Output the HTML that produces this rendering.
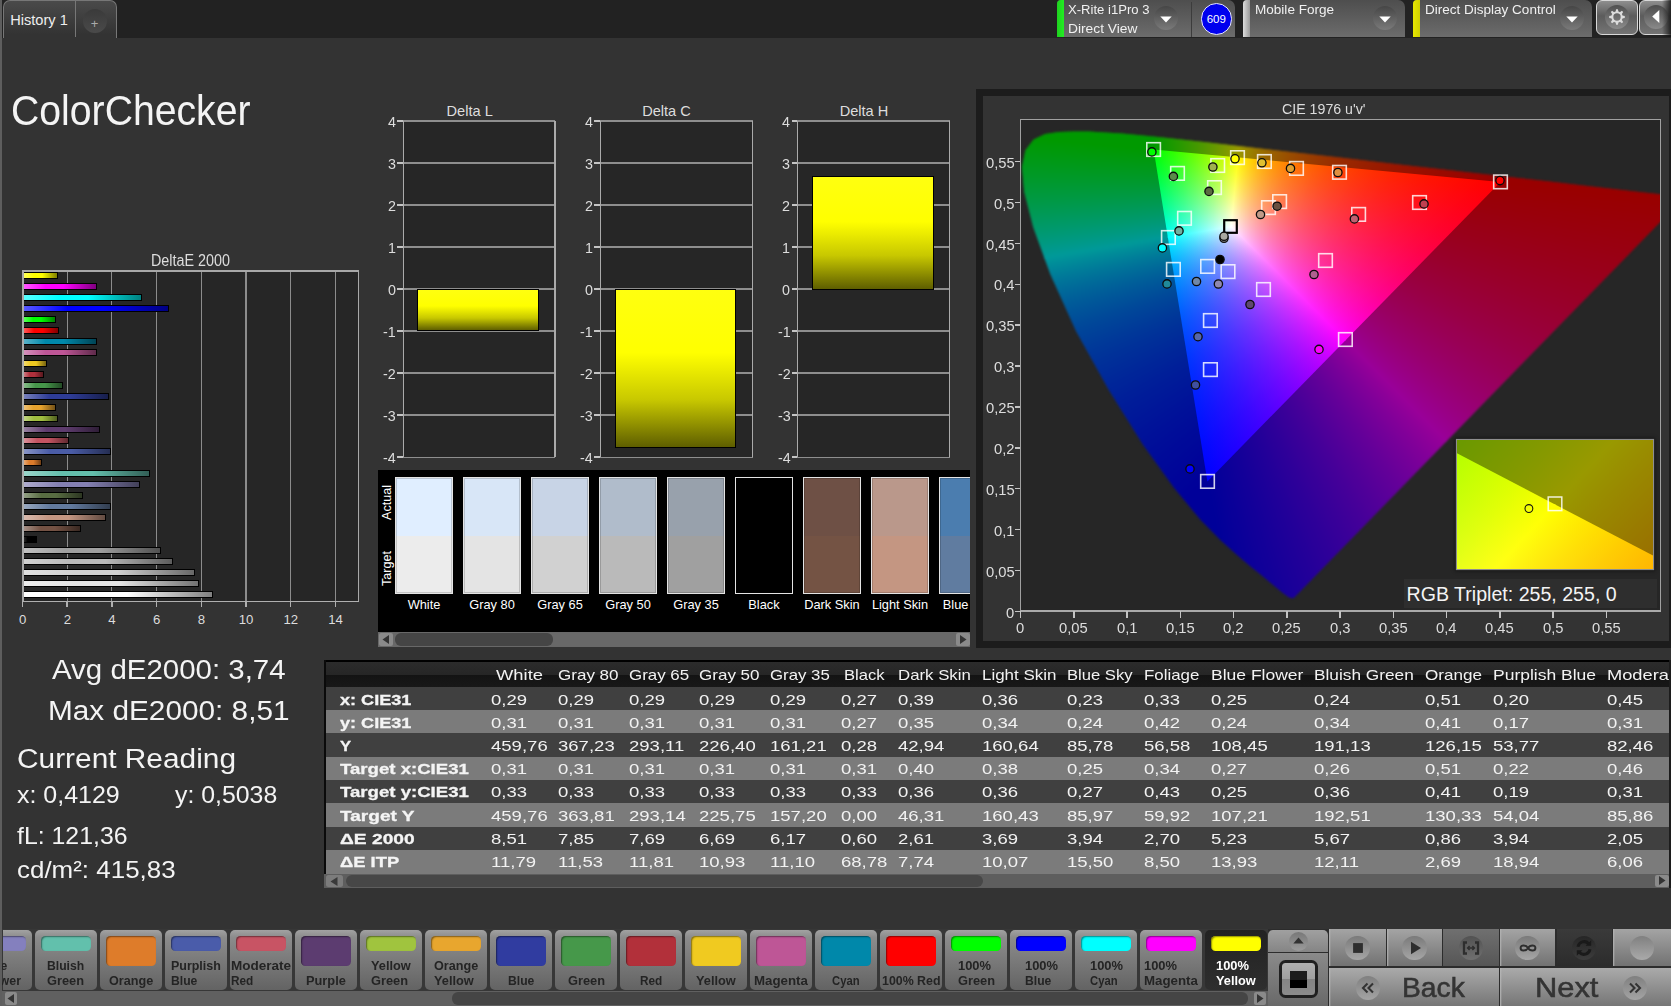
<!DOCTYPE html>
<html lang="en"><head><meta charset="utf-8"><title>ColorChecker</title><style>
html,body{margin:0;padding:0;background:#333;overflow:hidden}
#r{position:relative;width:1671px;height:1006px;overflow:hidden;font-family:"Liberation Sans",sans-serif;background:#333}
#r div,#r svg,#r span{position:absolute}
#r svg{overflow:visible}
.t{white-space:nowrap;line-height:1;transform-origin:0 0}
.f{left:0;top:0;right:0;bottom:0}
</style></head>
<body><div id="r">
<div style="left:0.00px;top:0.00px;width:1671.00px;height:38.00px;background:#222"></div>
<div style="left:0.00px;top:38.00px;width:1671.00px;height:968.00px;background:#333"></div>
<div style="left:0.00px;top:0.00px;width:2.00px;height:1006.00px;background:#5e5e5e"></div>
<div style="left:3.00px;top:0.00px;width:114.00px;height:38.00px;background:linear-gradient(#4a4a4a,#333 90%);border:1px solid #777;border-bottom:none;border-radius:7px 7px 0 0;box-sizing:border-box"></div>
<div style="left:75.00px;top:1.00px;width:1.00px;height:36.00px;background:#777"></div>
<span class="t" style="left:10.20px;top:13.00px;font-size:14.60px;color:#eee;">History 1</span>
<div style="left:82.50px;top:8.50px;width:24.00px;height:24.00px;border-radius:50%;background:linear-gradient(#3a3a3a,#4a4a4a)"></div>
<span class="t" style="left:90.80px;top:17.00px;font-size:13.00px;color:#aaa;">+</span>
<div style="left:1057.20px;top:0.00px;width:177.80px;height:36.50px;background:linear-gradient(#4e4e4e,#6c6c6c);border-radius:4px 7px 0 0"></div>
<div style="left:1057.20px;top:0.00px;width:6.50px;height:36.50px;border-radius:4px 0 0 0;background:linear-gradient(90deg,#1fd01f,#22ee22)"></div>
<div style="left:1154.40px;top:6.00px;width:24.00px;height:24.00px;border-radius:50%;background:linear-gradient(#464646,#7a7a7a)"></div>
<svg style="left:1160.4px;top:15.5px" width="12" height="7"><path d="M0.3 0.6h11.4l-5.7 6z" fill="#fff"/></svg>
<div style="left:1190.50px;top:2.00px;width:1.20px;height:34.50px;background:#3c3c3c"></div>
<span class="t" style="left:1068.20px;top:4.00px;font-size:12.30px;color:#f0f0f0;transform:scaleX(1.0644);">X-Rite i1Pro 3</span>
<span class="t" style="left:1068.20px;top:23.00px;font-size:12.30px;color:#f0f0f0;transform:scaleX(1.1209);">Direct View</span>
<div style="left:1200.60px;top:3.20px;width:31.40px;height:31.40px;border-radius:50%;background:#0000ee;border:1.3px solid #e8e8ff;box-sizing:border-box"></div>
<span class="t" style="left:1206.71px;top:14.00px;font-size:11.50px;color:#fff;">609</span>
<div style="left:1243.00px;top:0.00px;width:162.20px;height:36.50px;background:linear-gradient(#4e4e4e,#6c6c6c);border-radius:4px 7px 0 0"></div>
<div style="left:1243.00px;top:0.00px;width:6.50px;height:36.50px;border-radius:4px 0 0 0;background:linear-gradient(90deg,#ddd,#999)"></div>
<div style="left:1372.80px;top:6.00px;width:24.00px;height:24.00px;border-radius:50%;background:linear-gradient(#464646,#7a7a7a)"></div>
<svg style="left:1378.8px;top:15.5px" width="12" height="7"><path d="M0.3 0.6h11.4l-5.7 6z" fill="#fff"/></svg>
<span class="t" style="left:1254.50px;top:4.00px;font-size:12.30px;color:#f0f0f0;transform:scaleX(1.1019);">Mobile Forge</span>
<div style="left:1413.00px;top:0.00px;width:179.00px;height:36.50px;background:linear-gradient(#4e4e4e,#6c6c6c);border-radius:4px 7px 0 0"></div>
<div style="left:1413.00px;top:0.00px;width:6.50px;height:36.50px;border-radius:4px 0 0 0;background:linear-gradient(90deg,#e8e800,#d0d000)"></div>
<div style="left:1559.90px;top:6.00px;width:24.00px;height:24.00px;border-radius:50%;background:linear-gradient(#464646,#7a7a7a)"></div>
<svg style="left:1565.9px;top:15.5px" width="12" height="7"><path d="M0.3 0.6h11.4l-5.7 6z" fill="#fff"/></svg>
<span class="t" style="left:1424.50px;top:4.00px;font-size:12.30px;color:#f0f0f0;transform:scaleX(1.0990);">Direct Display Control</span>
<div style="left:1596.20px;top:-0.50px;width:41.60px;height:35.10px;background:linear-gradient(#8e8e8e,#5c5c5c 45%,#747474);border:1.4px solid #d8d8d8;border-radius:6px;box-sizing:border-box"></div>
<div style="left:1604.80px;top:5.30px;width:24.00px;height:24.00px;border-radius:50%;background:linear-gradient(#505050,#8c8c8c)"></div>
<svg style="left:1606.8px;top:7.2px" width="20" height="20" viewBox="-10 -10 20 20"><path d="M-1.45 -5h2.9l-0.55 -2.8h-1.8z" transform="rotate(0)" fill="#dcdcdc"/><path d="M-1.45 -5h2.9l-0.55 -2.8h-1.8z" transform="rotate(45)" fill="#dcdcdc"/><path d="M-1.45 -5h2.9l-0.55 -2.8h-1.8z" transform="rotate(90)" fill="#dcdcdc"/><path d="M-1.45 -5h2.9l-0.55 -2.8h-1.8z" transform="rotate(135)" fill="#dcdcdc"/><path d="M-1.45 -5h2.9l-0.55 -2.8h-1.8z" transform="rotate(180)" fill="#dcdcdc"/><path d="M-1.45 -5h2.9l-0.55 -2.8h-1.8z" transform="rotate(225)" fill="#dcdcdc"/><path d="M-1.45 -5h2.9l-0.55 -2.8h-1.8z" transform="rotate(270)" fill="#dcdcdc"/><path d="M-1.45 -5h2.9l-0.55 -2.8h-1.8z" transform="rotate(315)" fill="#dcdcdc"/><circle r="4.7" fill="none" stroke="#dcdcdc" stroke-width="2"/></svg>
<div style="left:1638.80px;top:-0.50px;width:40.00px;height:35.10px;background:linear-gradient(#8e8e8e,#5c5c5c 45%,#747474);border:1.4px solid #d8d8d8;border-radius:6px;box-sizing:border-box"></div>
<div style="left:1643.50px;top:5.30px;width:24.00px;height:24.00px;border-radius:50%;background:linear-gradient(#4c4c4c,#8a8a8a)"></div>
<svg style="left:1651.8px;top:10px" width="8" height="13"><path d="M7.3 0v13l-7.1-6.5z" fill="#fff"/></svg>
<div style="left:1662.00px;top:0.00px;width:9.00px;height:37.00px;background:linear-gradient(90deg,rgba(20,20,20,0),rgba(20,20,20,.85))"></div>
<span class="t" style="left:11.20px;top:90.00px;font-size:41.70px;color:#f4f4f4;transform:scaleX(0.9399);">ColorChecker</span>
<span class="t" style="left:151.00px;top:253.00px;font-size:15.60px;color:#ddd;transform:scaleX(0.9212);">DeltaE 2000</span>
<div style="left:22.00px;top:270.00px;width:337.00px;height:332.00px;background:#262626"></div>
<div style="left:66.50px;top:270.00px;width:1.25px;height:332.00px;background:#8c8c8c"></div>
<div style="left:111.20px;top:270.00px;width:1.25px;height:332.00px;background:#8c8c8c"></div>
<div style="left:155.90px;top:270.00px;width:1.25px;height:332.00px;background:#8c8c8c"></div>
<div style="left:200.60px;top:270.00px;width:1.25px;height:332.00px;background:#8c8c8c"></div>
<div style="left:245.30px;top:270.00px;width:1.25px;height:332.00px;background:#8c8c8c"></div>
<div style="left:290.00px;top:270.00px;width:1.25px;height:332.00px;background:#8c8c8c"></div>
<div style="left:334.70px;top:270.00px;width:1.25px;height:332.00px;background:#8c8c8c"></div>
<div style="left:23.10px;top:271.80px;width:34.42px;height:7.60px;background:linear-gradient(90deg,rgb(255,255,89),rgb(255,255,0) 30%,rgb(255,255,0) 55%,rgb(128,128,0));border:1px solid #000;box-sizing:border-box"></div>
<div style="left:23.10px;top:282.80px;width:73.75px;height:7.60px;background:linear-gradient(90deg,rgb(255,89,255),rgb(255,0,255) 30%,rgb(255,0,255) 55%,rgb(128,0,128));border:1px solid #000;box-sizing:border-box"></div>
<div style="left:23.10px;top:293.80px;width:118.90px;height:7.60px;background:linear-gradient(90deg,rgb(89,255,255),rgb(0,255,255) 30%,rgb(0,255,255) 55%,rgb(0,128,128));border:1px solid #000;box-sizing:border-box"></div>
<div style="left:23.10px;top:304.80px;width:146.39px;height:7.60px;background:linear-gradient(90deg,rgb(89,89,255),rgb(0,0,255) 30%,rgb(0,0,255) 55%,rgb(0,0,128));border:1px solid #000;box-sizing:border-box"></div>
<div style="left:23.10px;top:315.80px;width:32.41px;height:7.60px;background:linear-gradient(90deg,rgb(89,255,89),rgb(0,255,0) 30%,rgb(0,255,0) 55%,rgb(0,128,0));border:1px solid #000;box-sizing:border-box"></div>
<div style="left:23.10px;top:326.80px;width:35.98px;height:7.60px;background:linear-gradient(90deg,rgb(255,89,89),rgb(255,0,0) 30%,rgb(255,0,0) 55%,rgb(128,0,0));border:1px solid #000;box-sizing:border-box"></div>
<div style="left:23.10px;top:337.80px;width:73.75px;height:7.60px;background:linear-gradient(90deg,rgb(89,178,200),rgb(0,136,170) 30%,rgb(0,136,170) 55%,rgb(0,68,85));border:1px solid #000;box-sizing:border-box"></div>
<div style="left:23.10px;top:348.80px;width:73.75px;height:7.60px;background:linear-gradient(90deg,rgb(213,145,187),rgb(190,86,150) 30%,rgb(190,86,150) 55%,rgb(95,43,75));border:1px solid #000;box-sizing:border-box"></div>
<div style="left:23.10px;top:359.80px;width:24.36px;height:7.60px;background:linear-gradient(90deg,rgb(244,219,110),rgb(238,200,32) 30%,rgb(238,200,32) 55%,rgb(119,100,16));border:1px solid #000;box-sizing:border-box"></div>
<div style="left:23.10px;top:370.80px;width:21.23px;height:7.60px;background:linear-gradient(90deg,rgb(204,120,128),rgb(176,48,60) 30%,rgb(176,48,60) 55%,rgb(88,24,30));border:1px solid #000;box-sizing:border-box"></div>
<div style="left:23.10px;top:381.80px;width:39.56px;height:7.60px;background:linear-gradient(90deg,rgb(135,187,137),rgb(70,150,74) 30%,rgb(70,150,74) 55%,rgb(35,75,37));border:1px solid #000;box-sizing:border-box"></div>
<div style="left:23.10px;top:392.80px;width:85.82px;height:7.60px;background:linear-gradient(90deg,rgb(119,128,187),rgb(46,60,150) 30%,rgb(46,60,150) 55%,rgb(23,30,75));border:1px solid #000;box-sizing:border-box"></div>
<div style="left:23.10px;top:403.80px;width:32.41px;height:7.60px;background:linear-gradient(90deg,rgb(239,195,119),rgb(230,162,46) 30%,rgb(230,162,46) 55%,rgb(115,81,23));border:1px solid #000;box-sizing:border-box"></div>
<div style="left:23.10px;top:414.80px;width:34.42px;height:7.60px;background:linear-gradient(90deg,rgb(193,213,131),rgb(160,190,64) 30%,rgb(160,190,64) 55%,rgb(80,95,32));border:1px solid #000;box-sizing:border-box"></div>
<div style="left:23.10px;top:425.80px;width:76.66px;height:7.60px;background:linear-gradient(90deg,rgb(150,128,161),rgb(94,60,110) 30%,rgb(94,60,110) 55%,rgb(47,30,55));border:1px solid #000;box-sizing:border-box"></div>
<div style="left:23.10px;top:436.80px;width:45.82px;height:7.60px;background:linear-gradient(90deg,rgb(217,144,153),rgb(196,84,98) 30%,rgb(196,84,98) 55%,rgb(98,42,49));border:1px solid #000;box-sizing:border-box"></div>
<div style="left:23.10px;top:447.80px;width:88.06px;height:7.60px;background:linear-gradient(90deg,rgb(137,149,197),rgb(74,92,166) 30%,rgb(74,92,166) 55%,rgb(37,46,83));border:1px solid #000;box-sizing:border-box"></div>
<div style="left:23.10px;top:458.80px;width:19.22px;height:7.60px;background:linear-gradient(90deg,rgb(232,170,118),rgb(220,124,44) 30%,rgb(220,124,44) 55%,rgb(110,62,22));border:1px solid #000;box-sizing:border-box"></div>
<div style="left:23.10px;top:469.80px;width:126.72px;height:7.60px;background:linear-gradient(90deg,rgb(154,213,201),rgb(100,190,172) 30%,rgb(100,190,172) 55%,rgb(50,95,86));border:1px solid #000;box-sizing:border-box"></div>
<div style="left:23.10px;top:480.80px;width:116.89px;height:7.60px;background:linear-gradient(90deg,rgb(175,172,205),rgb(132,128,178) 30%,rgb(132,128,178) 55%,rgb(66,64,89));border:1px solid #000;box-sizing:border-box"></div>
<div style="left:23.10px;top:491.80px;width:60.35px;height:7.60px;background:linear-gradient(90deg,rgb(146,159,132),rgb(88,108,66) 30%,rgb(88,108,66) 55%,rgb(44,54,33));border:1px solid #000;box-sizing:border-box"></div>
<div style="left:23.10px;top:502.80px;width:88.06px;height:7.60px;background:linear-gradient(90deg,rgb(153,169,192),rgb(98,122,158) 30%,rgb(98,122,158) 55%,rgb(49,61,79));border:1px solid #000;box-sizing:border-box"></div>
<div style="left:23.10px;top:513.80px;width:82.47px;height:7.60px;background:linear-gradient(90deg,rgb(217,187,174),rgb(196,150,130) 30%,rgb(196,150,130) 55%,rgb(98,75,65));border:1px solid #000;box-sizing:border-box"></div>
<div style="left:23.10px;top:524.80px;width:58.33px;height:7.60px;background:linear-gradient(90deg,rgb(165,143,133),rgb(116,82,68) 30%,rgb(116,82,68) 55%,rgb(58,41,34));border:1px solid #000;box-sizing:border-box"></div>
<div style="left:23.10px;top:535.80px;width:13.41px;height:7.60px;background:linear-gradient(90deg,rgb(40,40,40),rgb(0,0,0) 30%,rgb(0,0,0) 55%,rgb(0,0,0));border:1px solid #000;box-sizing:border-box"></div>
<div style="left:23.10px;top:546.80px;width:137.90px;height:7.60px;background:linear-gradient(90deg,rgb(193,193,193),rgb(160,160,160) 30%,rgb(160,160,160) 55%,rgb(80,80,80));border:1px solid #000;box-sizing:border-box"></div>
<div style="left:23.10px;top:557.80px;width:149.52px;height:7.60px;background:linear-gradient(90deg,rgb(210,210,210),rgb(186,186,186) 30%,rgb(186,186,186) 55%,rgb(93,93,93));border:1px solid #000;box-sizing:border-box"></div>
<div style="left:23.10px;top:568.80px;width:171.87px;height:7.60px;background:linear-gradient(90deg,rgb(225,225,225),rgb(209,209,209) 30%,rgb(209,209,209) 55%,rgb(104,104,104));border:1px solid #000;box-sizing:border-box"></div>
<div style="left:23.10px;top:579.80px;width:175.45px;height:7.60px;background:linear-gradient(90deg,rgb(237,237,237),rgb(228,228,228) 30%,rgb(228,228,228) 55%,rgb(114,114,114));border:1px solid #000;box-sizing:border-box"></div>
<div style="left:23.10px;top:590.80px;width:190.20px;height:7.60px;background:linear-gradient(90deg,rgb(255,255,255),rgb(255,255,255) 30%,rgb(255,255,255) 55%,rgb(128,128,128));border:1px solid #000;box-sizing:border-box"></div>
<div style="left:22.00px;top:270.00px;width:337.00px;height:1.50px;background:#a8a8a8"></div>
<div style="left:22.00px;top:270.00px;width:1.50px;height:332.00px;background:#a8a8a8"></div>
<div style="left:357.50px;top:270.00px;width:1.50px;height:332.00px;background:#a8a8a8"></div>
<div style="left:22.00px;top:600.80px;width:337.00px;height:1.50px;background:#b0b0b0"></div>
<div style="left:21.70px;top:602.00px;width:1.50px;height:5.00px;background:#b0b0b0"></div>
<span class="t" style="left:18.93px;top:613.00px;font-size:13.20px;color:#ddd;">0</span>
<div style="left:66.40px;top:602.00px;width:1.50px;height:5.00px;background:#b0b0b0"></div>
<span class="t" style="left:63.63px;top:613.00px;font-size:13.20px;color:#ddd;">2</span>
<div style="left:111.10px;top:602.00px;width:1.50px;height:5.00px;background:#b0b0b0"></div>
<span class="t" style="left:108.33px;top:613.00px;font-size:13.20px;color:#ddd;">4</span>
<div style="left:155.80px;top:602.00px;width:1.50px;height:5.00px;background:#b0b0b0"></div>
<span class="t" style="left:153.03px;top:613.00px;font-size:13.20px;color:#ddd;">6</span>
<div style="left:200.50px;top:602.00px;width:1.50px;height:5.00px;background:#b0b0b0"></div>
<span class="t" style="left:197.73px;top:613.00px;font-size:13.20px;color:#ddd;">8</span>
<div style="left:245.20px;top:602.00px;width:1.50px;height:5.00px;background:#b0b0b0"></div>
<span class="t" style="left:238.76px;top:613.00px;font-size:13.20px;color:#ddd;">10</span>
<div style="left:289.90px;top:602.00px;width:1.50px;height:5.00px;background:#b0b0b0"></div>
<span class="t" style="left:283.46px;top:613.00px;font-size:13.20px;color:#ddd;">12</span>
<div style="left:334.60px;top:602.00px;width:1.50px;height:5.00px;background:#b0b0b0"></div>
<span class="t" style="left:328.16px;top:613.00px;font-size:13.20px;color:#ddd;">14</span>
<span class="t" style="left:52.30px;top:655.00px;font-size:28.20px;color:#f4f4f4;transform:scaleX(1.0447);">Avg dE2000: 3,74</span>
<span class="t" style="left:48.40px;top:696.00px;font-size:28.20px;color:#f4f4f4;transform:scaleX(1.0555);">Max dE2000: 8,51</span>
<span class="t" style="left:16.60px;top:744.00px;font-size:28.20px;color:#f4f4f4;transform:scaleX(1.0589);">Current Reading</span>
<span class="t" style="left:16.60px;top:784.00px;font-size:23.70px;color:#f4f4f4;transform:scaleX(1.0543);">x: 0,4129</span>
<span class="t" style="left:174.70px;top:784.00px;font-size:23.70px;color:#f4f4f4;transform:scaleX(1.0492);">y: 0,5038</span>
<span class="t" style="left:17.00px;top:825.00px;font-size:23.70px;color:#f4f4f4;transform:scaleX(1.0492);">fL: 121,36</span>
<span class="t" style="left:17.00px;top:859.00px;font-size:23.70px;color:#f4f4f4;transform:scaleX(1.0952);">cd/m²: 415,83</span>
<div style="left:402.80px;top:121.00px;width:152.70px;height:336.10px;background:#262626"></div>
<div style="left:402.80px;top:456.50px;width:152.70px;height:1.30px;background:#8e8e8e"></div>
<div style="left:397.30px;top:456.40px;width:5.50px;height:1.50px;background:#c4c4c4"></div>
<span class="t" style="left:383.07px;top:452.00px;font-size:13.90px;color:#ddd;transform:scaleX(1.0300);">-4</span>
<div style="left:402.80px;top:414.49px;width:152.70px;height:1.30px;background:#8e8e8e"></div>
<div style="left:397.30px;top:414.39px;width:5.50px;height:1.50px;background:#c4c4c4"></div>
<span class="t" style="left:383.07px;top:410.00px;font-size:13.90px;color:#ddd;transform:scaleX(1.0300);">-3</span>
<div style="left:402.80px;top:372.48px;width:152.70px;height:1.30px;background:#8e8e8e"></div>
<div style="left:397.30px;top:372.38px;width:5.50px;height:1.50px;background:#c4c4c4"></div>
<span class="t" style="left:383.07px;top:368.00px;font-size:13.90px;color:#ddd;transform:scaleX(1.0300);">-2</span>
<div style="left:402.80px;top:330.46px;width:152.70px;height:1.30px;background:#8e8e8e"></div>
<div style="left:397.30px;top:330.36px;width:5.50px;height:1.50px;background:#c4c4c4"></div>
<span class="t" style="left:383.07px;top:326.00px;font-size:13.90px;color:#ddd;transform:scaleX(1.0300);">-1</span>
<div style="left:402.80px;top:288.45px;width:152.70px;height:1.30px;background:#8e8e8e"></div>
<div style="left:397.30px;top:288.35px;width:5.50px;height:1.50px;background:#c4c4c4"></div>
<span class="t" style="left:387.84px;top:284.00px;font-size:13.90px;color:#ddd;transform:scaleX(1.0300);">0</span>
<div style="left:402.80px;top:246.44px;width:152.70px;height:1.30px;background:#8e8e8e"></div>
<div style="left:397.30px;top:246.34px;width:5.50px;height:1.50px;background:#c4c4c4"></div>
<span class="t" style="left:387.84px;top:242.00px;font-size:13.90px;color:#ddd;transform:scaleX(1.0300);">1</span>
<div style="left:402.80px;top:204.43px;width:152.70px;height:1.30px;background:#8e8e8e"></div>
<div style="left:397.30px;top:204.33px;width:5.50px;height:1.50px;background:#c4c4c4"></div>
<span class="t" style="left:387.84px;top:200.00px;font-size:13.90px;color:#ddd;transform:scaleX(1.0300);">2</span>
<div style="left:402.80px;top:162.41px;width:152.70px;height:1.30px;background:#8e8e8e"></div>
<div style="left:397.30px;top:162.31px;width:5.50px;height:1.50px;background:#c4c4c4"></div>
<span class="t" style="left:387.84px;top:158.00px;font-size:13.90px;color:#ddd;transform:scaleX(1.0300);">3</span>
<div style="left:402.80px;top:120.40px;width:152.70px;height:1.30px;background:#8e8e8e"></div>
<div style="left:397.30px;top:120.30px;width:5.50px;height:1.50px;background:#c4c4c4"></div>
<span class="t" style="left:387.84px;top:116.00px;font-size:13.90px;color:#ddd;transform:scaleX(1.0300);">4</span>
<div style="left:402.60px;top:121.00px;width:1.40px;height:336.10px;background:#aaa"></div>
<div style="left:554.30px;top:121.00px;width:1.40px;height:336.10px;background:#aaa"></div>
<div style="left:417.40px;top:289.05px;width:121.40px;height:42.39px;background:linear-gradient(#ffff10,#ffff00 40%,#c8c800 70%,#5e5e00);border:1px solid #000;box-sizing:border-box"></div>
<span class="t" style="left:446.57px;top:104.00px;font-size:14.60px;color:#ddd;">Delta L</span>
<div style="left:599.90px;top:121.00px;width:152.80px;height:336.10px;background:#262626"></div>
<div style="left:599.90px;top:456.50px;width:152.80px;height:1.30px;background:#8e8e8e"></div>
<div style="left:594.40px;top:456.40px;width:5.50px;height:1.50px;background:#c4c4c4"></div>
<span class="t" style="left:580.17px;top:452.00px;font-size:13.90px;color:#ddd;transform:scaleX(1.0300);">-4</span>
<div style="left:599.90px;top:414.49px;width:152.80px;height:1.30px;background:#8e8e8e"></div>
<div style="left:594.40px;top:414.39px;width:5.50px;height:1.50px;background:#c4c4c4"></div>
<span class="t" style="left:580.17px;top:410.00px;font-size:13.90px;color:#ddd;transform:scaleX(1.0300);">-3</span>
<div style="left:599.90px;top:372.48px;width:152.80px;height:1.30px;background:#8e8e8e"></div>
<div style="left:594.40px;top:372.38px;width:5.50px;height:1.50px;background:#c4c4c4"></div>
<span class="t" style="left:580.17px;top:368.00px;font-size:13.90px;color:#ddd;transform:scaleX(1.0300);">-2</span>
<div style="left:599.90px;top:330.46px;width:152.80px;height:1.30px;background:#8e8e8e"></div>
<div style="left:594.40px;top:330.36px;width:5.50px;height:1.50px;background:#c4c4c4"></div>
<span class="t" style="left:580.17px;top:326.00px;font-size:13.90px;color:#ddd;transform:scaleX(1.0300);">-1</span>
<div style="left:599.90px;top:288.45px;width:152.80px;height:1.30px;background:#8e8e8e"></div>
<div style="left:594.40px;top:288.35px;width:5.50px;height:1.50px;background:#c4c4c4"></div>
<span class="t" style="left:584.94px;top:284.00px;font-size:13.90px;color:#ddd;transform:scaleX(1.0300);">0</span>
<div style="left:599.90px;top:246.44px;width:152.80px;height:1.30px;background:#8e8e8e"></div>
<div style="left:594.40px;top:246.34px;width:5.50px;height:1.50px;background:#c4c4c4"></div>
<span class="t" style="left:584.94px;top:242.00px;font-size:13.90px;color:#ddd;transform:scaleX(1.0300);">1</span>
<div style="left:599.90px;top:204.43px;width:152.80px;height:1.30px;background:#8e8e8e"></div>
<div style="left:594.40px;top:204.33px;width:5.50px;height:1.50px;background:#c4c4c4"></div>
<span class="t" style="left:584.94px;top:200.00px;font-size:13.90px;color:#ddd;transform:scaleX(1.0300);">2</span>
<div style="left:599.90px;top:162.41px;width:152.80px;height:1.30px;background:#8e8e8e"></div>
<div style="left:594.40px;top:162.31px;width:5.50px;height:1.50px;background:#c4c4c4"></div>
<span class="t" style="left:584.94px;top:158.00px;font-size:13.90px;color:#ddd;transform:scaleX(1.0300);">3</span>
<div style="left:599.90px;top:120.40px;width:152.80px;height:1.30px;background:#8e8e8e"></div>
<div style="left:594.40px;top:120.30px;width:5.50px;height:1.50px;background:#c4c4c4"></div>
<span class="t" style="left:584.94px;top:116.00px;font-size:13.90px;color:#ddd;transform:scaleX(1.0300);">4</span>
<div style="left:599.70px;top:121.00px;width:1.40px;height:336.10px;background:#aaa"></div>
<div style="left:751.50px;top:121.00px;width:1.40px;height:336.10px;background:#aaa"></div>
<div style="left:614.60px;top:289.05px;width:121.40px;height:159.19px;background:linear-gradient(#ffff10,#ffff00 40%,#c8c800 70%,#5e5e00);border:1px solid #000;box-sizing:border-box"></div>
<span class="t" style="left:642.16px;top:104.00px;font-size:14.60px;color:#ddd;">Delta C</span>
<div style="left:797.30px;top:121.00px;width:153.00px;height:336.10px;background:#262626"></div>
<div style="left:797.30px;top:456.50px;width:153.00px;height:1.30px;background:#8e8e8e"></div>
<div style="left:791.80px;top:456.40px;width:5.50px;height:1.50px;background:#c4c4c4"></div>
<span class="t" style="left:777.57px;top:452.00px;font-size:13.90px;color:#ddd;transform:scaleX(1.0300);">-4</span>
<div style="left:797.30px;top:414.49px;width:153.00px;height:1.30px;background:#8e8e8e"></div>
<div style="left:791.80px;top:414.39px;width:5.50px;height:1.50px;background:#c4c4c4"></div>
<span class="t" style="left:777.57px;top:410.00px;font-size:13.90px;color:#ddd;transform:scaleX(1.0300);">-3</span>
<div style="left:797.30px;top:372.48px;width:153.00px;height:1.30px;background:#8e8e8e"></div>
<div style="left:791.80px;top:372.38px;width:5.50px;height:1.50px;background:#c4c4c4"></div>
<span class="t" style="left:777.57px;top:368.00px;font-size:13.90px;color:#ddd;transform:scaleX(1.0300);">-2</span>
<div style="left:797.30px;top:330.46px;width:153.00px;height:1.30px;background:#8e8e8e"></div>
<div style="left:791.80px;top:330.36px;width:5.50px;height:1.50px;background:#c4c4c4"></div>
<span class="t" style="left:777.57px;top:326.00px;font-size:13.90px;color:#ddd;transform:scaleX(1.0300);">-1</span>
<div style="left:797.30px;top:288.45px;width:153.00px;height:1.30px;background:#8e8e8e"></div>
<div style="left:791.80px;top:288.35px;width:5.50px;height:1.50px;background:#c4c4c4"></div>
<span class="t" style="left:782.34px;top:284.00px;font-size:13.90px;color:#ddd;transform:scaleX(1.0300);">0</span>
<div style="left:797.30px;top:246.44px;width:153.00px;height:1.30px;background:#8e8e8e"></div>
<div style="left:791.80px;top:246.34px;width:5.50px;height:1.50px;background:#c4c4c4"></div>
<span class="t" style="left:782.34px;top:242.00px;font-size:13.90px;color:#ddd;transform:scaleX(1.0300);">1</span>
<div style="left:797.30px;top:204.43px;width:153.00px;height:1.30px;background:#8e8e8e"></div>
<div style="left:791.80px;top:204.33px;width:5.50px;height:1.50px;background:#c4c4c4"></div>
<span class="t" style="left:782.34px;top:200.00px;font-size:13.90px;color:#ddd;transform:scaleX(1.0300);">2</span>
<div style="left:797.30px;top:162.41px;width:153.00px;height:1.30px;background:#8e8e8e"></div>
<div style="left:791.80px;top:162.31px;width:5.50px;height:1.50px;background:#c4c4c4"></div>
<span class="t" style="left:782.34px;top:158.00px;font-size:13.90px;color:#ddd;transform:scaleX(1.0300);">3</span>
<div style="left:797.30px;top:120.40px;width:153.00px;height:1.30px;background:#8e8e8e"></div>
<div style="left:791.80px;top:120.30px;width:5.50px;height:1.50px;background:#c4c4c4"></div>
<span class="t" style="left:782.34px;top:116.00px;font-size:13.90px;color:#ddd;transform:scaleX(1.0300);">4</span>
<div style="left:797.10px;top:121.00px;width:1.40px;height:336.10px;background:#aaa"></div>
<div style="left:949.10px;top:121.00px;width:1.40px;height:336.10px;background:#aaa"></div>
<div style="left:811.90px;top:176.46px;width:121.70px;height:113.39px;background:linear-gradient(#ffff10,#ffff00 40%,#c8c800 70%,#5e5e00);border:1px solid #000;box-sizing:border-box"></div>
<span class="t" style="left:839.66px;top:104.00px;font-size:14.60px;color:#ddd;">Delta H</span>
<div style="left:378.00px;top:470.20px;width:592.00px;height:177.00px;background:#000"></div>
<div style="left:378px;top:470.2px;width:592px;height:162px;overflow:hidden">
<div style="left:17.0px;top:6.6px;width:58px;height:117px;box-sizing:border-box;border:1px solid #e4e4e4;box-shadow:inset 0 0 0 1px rgba(0,0,0,.17);background:linear-gradient(rgb(224,238,255) 50.5%,rgb(236,236,236) 50.5%)"></div>
<div style="left:85.0px;top:6.6px;width:58px;height:117px;box-sizing:border-box;border:1px solid #e4e4e4;box-shadow:inset 0 0 0 1px rgba(0,0,0,.17);background:linear-gradient(rgb(216,230,247) 50.5%,rgb(228,228,228) 50.5%)"></div>
<div style="left:153.0px;top:6.6px;width:58px;height:117px;box-sizing:border-box;border:1px solid #e4e4e4;box-shadow:inset 0 0 0 1px rgba(0,0,0,.17);background:linear-gradient(rgb(200,212,230) 50.5%,rgb(209,209,209) 50.5%)"></div>
<div style="left:221.0px;top:6.6px;width:58px;height:117px;box-sizing:border-box;border:1px solid #e4e4e4;box-shadow:inset 0 0 0 1px rgba(0,0,0,.17);background:linear-gradient(rgb(176,188,203) 50.5%,rgb(186,186,186) 50.5%)"></div>
<div style="left:289.0px;top:6.6px;width:58px;height:117px;box-sizing:border-box;border:1px solid #e4e4e4;box-shadow:inset 0 0 0 1px rgba(0,0,0,.17);background:linear-gradient(rgb(152,161,172) 50.5%,rgb(160,160,160) 50.5%)"></div>
<div style="left:357.0px;top:6.6px;width:58px;height:117px;box-sizing:border-box;border:1px solid #e4e4e4;box-shadow:inset 0 0 0 1px rgba(0,0,0,.17);background:linear-gradient(rgb(0,0,0) 50.5%,rgb(0,0,0) 50.5%)"></div>
<div style="left:425.0px;top:6.6px;width:58px;height:117px;box-sizing:border-box;border:1px solid #e4e4e4;box-shadow:inset 0 0 0 1px rgba(0,0,0,.17);background:linear-gradient(rgb(110,80,69) 50.5%,rgb(116,83,68) 50.5%)"></div>
<div style="left:493.0px;top:6.6px;width:58px;height:117px;box-sizing:border-box;border:1px solid #e4e4e4;box-shadow:inset 0 0 0 1px rgba(0,0,0,.17);background:linear-gradient(rgb(186,152,139) 50.5%,rgb(196,150,130) 50.5%)"></div>
<div style="left:561.0px;top:6.6px;width:58px;height:117px;box-sizing:border-box;border:1px solid #e4e4e4;box-shadow:inset 0 0 0 1px rgba(0,0,0,.17);background:linear-gradient(rgb(75,125,175) 50.5%,rgb(96,124,160) 50.5%)"></div>
</div>
<span class="t" style="left:407.64px;top:599.00px;font-size:12.80px;color:#fff;">White</span>
<span class="t" style="left:469.24px;top:599.00px;font-size:12.80px;color:#fff;">Gray 80</span>
<span class="t" style="left:537.24px;top:599.00px;font-size:12.80px;color:#fff;">Gray 65</span>
<span class="t" style="left:605.24px;top:599.00px;font-size:12.80px;color:#fff;">Gray 50</span>
<span class="t" style="left:673.24px;top:599.00px;font-size:12.80px;color:#fff;">Gray 35</span>
<span class="t" style="left:748.34px;top:599.00px;font-size:12.80px;color:#fff;">Black</span>
<span class="t" style="left:804.26px;top:599.00px;font-size:12.80px;color:#fff;">Dark Skin</span>
<span class="t" style="left:871.89px;top:599.00px;font-size:12.80px;color:#fff;">Light Skin</span>
<div style="left:378px;top:590px;width:592px;height:30px;overflow:hidden">
<span class="t" style="left:564.75px;top:9.00px;font-size:12.80px;color:#fff;">Blue Sky</span>
</div>
<span class="t" style="left:380.6px;top:519.5px;font-size:12.6px;color:#fff;transform:rotate(-90deg);transform-origin:0 0">Actual</span>
<span class="t" style="left:380.6px;top:586.2px;font-size:12.6px;color:#fff;transform:rotate(-90deg);transform-origin:0 0">Target</span>
<div style="left:378.00px;top:631.60px;width:592.00px;height:15.40px;background:#686868"></div>
<div style="left:394.80px;top:633.00px;width:158.00px;height:12.60px;background:#454545;border-radius:6px"></div>
<div style="left:379.00px;top:633.00px;width:14.00px;height:12.60px;background:#8a8a8a;border-radius:2px"></div>
<svg style="left:382px;top:635px" width="8" height="9"><path d="M7 0v9l-6.5-4.5z" fill="#333"/></svg>
<div style="left:955.50px;top:633.00px;width:14.00px;height:12.60px;background:#8a8a8a;border-radius:2px"></div>
<svg style="left:959px;top:635px" width="8" height="9"><path d="M1 0v9l6.5-4.5z" fill="#333"/></svg>
<div style="left:976.00px;top:89.00px;width:700.00px;height:558.50px;background:#333;border:7px solid #1c1c1c;box-sizing:border-box"></div>
<span class="t" style="left:1281.70px;top:102.00px;font-size:14.00px;color:#ddd;transform:scaleX(1.0135);">CIE 1976 u'v'</span>
<div style="left:1021px;top:120px;width:640px;height:491px;background:#262626;overflow:hidden">
<div style="left:0;top:0;width:700px;height:491px;filter:blur(1.1px);"><div class="f" style="clip-path:polygon(273.0px 477.7px,271.8px 478.3px,268.1px 477.5px,261.6px 472.8px,249.5px 462.7px,240.9px 455.6px,229.6px 446.4px,216.1px 435.1px,199.4px 420.1px,179.5px 399.8px,153.0px 367.8px,121.7px 324.2px,87.7px 269.8px,55.0px 211.1px,29.5px 154.6px,12.2px 107.1px,3.2px 71.7px,1.0px 47.1px,4.4px 30.2px,12.6px 19.5px,24.1px 14.0px,37.9px 12.0px,52.8px 11.5px,68.0px 11.6px,83.9px 12.4px,101.0px 13.6px,119.5px 15.3px,139.9px 17.3px,162.6px 19.8px,187.6px 22.6px,215.3px 25.7px,245.7px 29.2px,278.9px 33.0px,314.7px 37.1px,352.6px 41.4px,391.5px 45.9px,429.2px 50.2px,466.0px 54.4px,499.2px 58.2px,528.6px 61.6px,553.6px 64.5px,592.2px 68.9px,620.5px 72.2px,639.1px 74.3px,650.1px 75.6px,659.8px 76.7px,663.5px 77.1px)"><div class="f" style="clip-path:polygon(208.2px 107.1px,208.3px 105.8px,3043.9px 2929.9px,4156.1px -549.0px,582.5px -3875.9px,209.3px 108.7px);background:conic-gradient(from 204.87deg at 186.36px 361.38px,rgb(0,255,0) 160.48deg,rgb(0,234,0) 161.45deg,rgb(0,216,0) 162.43deg,rgb(0,200,0) 163.40deg,rgb(0,185,0) 164.38deg,rgb(0,172,0) 165.36deg,rgb(0,160,0) 166.33deg,rgb(0,149,0) 167.31deg,rgb(0,139,0) 168.29deg,rgb(0,129,0) 169.26deg,rgb(0,121,0) 170.24deg,rgb(0,113,0) 171.21deg,rgb(0,106,0) 172.19deg,rgb(0,99,0) 173.17deg,rgb(0,92,0) 174.14deg,rgb(0,86,0) 175.12deg,rgb(0,80,0) 176.10deg,rgb(0,75,0) 177.07deg,rgb(0,70,0) 178.05deg,rgb(0,65,0) 179.02deg,rgb(0,61,0) 180.00deg,rgb(0,56,0) 180.98deg,rgb(0,52,0) 181.95deg,rgb(0,48,0) 182.93deg,rgb(0,44,0) 183.90deg,rgb(0,41,0) 184.88deg,rgb(0,37,0) 185.86deg,rgb(0,34,0) 186.83deg,rgb(0,31,0) 187.81deg,rgb(0,28,0) 188.79deg,rgb(0,25,0) 189.76deg,rgb(0,22,0) 190.74deg,rgb(0,19,0) 191.71deg,rgb(0,17,0) 192.69deg,rgb(0,14,0) 193.67deg,rgb(0,12,0) 194.64deg,rgb(0,9,0) 195.62deg,rgb(0,7,0) 196.60deg,rgb(0,4,0) 197.57deg,rgb(0,2,0) 198.55deg,rgb(0,0,0) 199.52deg),conic-gradient(from 295.12deg at 132.64px 29.48px,rgb(0,0,0) 160.23deg,rgb(0,0,4) 161.22deg,rgb(0,0,8) 162.21deg,rgb(0,0,13) 163.20deg,rgb(0,0,17) 164.19deg,rgb(0,0,21) 165.18deg,rgb(0,0,26) 166.16deg,rgb(0,0,30) 167.15deg,rgb(0,0,35) 168.14deg,rgb(0,0,40) 169.13deg,rgb(0,0,44) 170.12deg,rgb(0,0,49) 171.11deg,rgb(0,0,54) 172.09deg,rgb(0,0,59) 173.08deg,rgb(0,0,64) 174.07deg,rgb(0,0,69) 175.06deg,rgb(0,0,74) 176.05deg,rgb(0,0,80) 177.04deg,rgb(0,0,85) 178.02deg,rgb(0,0,91) 179.01deg,rgb(0,0,96) 180.00deg,rgb(0,0,102) 180.99deg,rgb(0,0,108) 181.98deg,rgb(0,0,114) 182.96deg,rgb(0,0,120) 183.95deg,rgb(0,0,127) 184.94deg,rgb(0,0,134) 185.93deg,rgb(0,0,140) 186.92deg,rgb(0,0,147) 187.91deg,rgb(0,0,155) 188.89deg,rgb(0,0,162) 189.88deg,rgb(0,0,170) 190.87deg,rgb(0,0,178) 191.86deg,rgb(0,0,186) 192.85deg,rgb(0,0,195) 193.84deg,rgb(0,0,204) 194.82deg,rgb(0,0,213) 195.81deg,rgb(0,0,223) 196.80deg,rgb(0,0,233) 197.79deg,rgb(0,0,244) 198.78deg,rgb(0,0,255) 199.77deg),rgb(255,0,0);background-blend-mode:screen,screen,normal;"></div><div class="f" style="clip-path:polygon(211.6px 108.1px,210.7px 108.8px,583.9px -3875.8px,-2624.0px -2715.9px,-3735.6px 763.2px,212.3px 107.1px);background:conic-gradient(from 178.08deg at 186.36px 361.38px,rgb(0,0,0) 172.73deg,rgb(5,0,0) 173.09deg,rgb(10,0,0) 173.45deg,rgb(15,0,0) 173.82deg,rgb(21,0,0) 174.18deg,rgb(26,0,0) 174.55deg,rgb(31,0,0) 174.91deg,rgb(37,0,0) 175.27deg,rgb(42,0,0) 175.64deg,rgb(47,0,0) 176.00deg,rgb(53,0,0) 176.36deg,rgb(59,0,0) 176.73deg,rgb(64,0,0) 177.09deg,rgb(70,0,0) 177.45deg,rgb(76,0,0) 177.82deg,rgb(82,0,0) 178.18deg,rgb(88,0,0) 178.55deg,rgb(94,0,0) 178.91deg,rgb(100,0,0) 179.27deg,rgb(106,0,0) 179.64deg,rgb(112,0,0) 180.00deg,rgb(118,0,0) 180.36deg,rgb(125,0,0) 180.73deg,rgb(131,0,0) 181.09deg,rgb(138,0,0) 181.45deg,rgb(144,0,0) 181.82deg,rgb(151,0,0) 182.18deg,rgb(158,0,0) 182.55deg,rgb(165,0,0) 182.91deg,rgb(171,0,0) 183.27deg,rgb(179,0,0) 183.64deg,rgb(186,0,0) 184.00deg,rgb(193,0,0) 184.36deg,rgb(200,0,0) 184.73deg,rgb(208,0,0) 185.09deg,rgb(215,0,0) 185.45deg,rgb(223,0,0) 185.82deg,rgb(231,0,0) 186.18deg,rgb(239,0,0) 186.55deg,rgb(247,0,0) 186.91deg,rgb(255,0,0) 187.27deg),conic-gradient(from 87.96deg at 479.55px 61.98px,rgb(0,0,255) 172.61deg,rgb(0,0,247) 172.98deg,rgb(0,0,238) 173.35deg,rgb(0,0,230) 173.72deg,rgb(0,0,222) 174.09deg,rgb(0,0,214) 174.45deg,rgb(0,0,207) 174.82deg,rgb(0,0,199) 175.19deg,rgb(0,0,192) 175.56deg,rgb(0,0,184) 175.93deg,rgb(0,0,177) 176.30deg,rgb(0,0,170) 176.67deg,rgb(0,0,163) 177.04deg,rgb(0,0,156) 177.41deg,rgb(0,0,149) 177.78deg,rgb(0,0,142) 178.15deg,rgb(0,0,136) 178.52deg,rgb(0,0,129) 178.89deg,rgb(0,0,123) 179.26deg,rgb(0,0,116) 179.63deg,rgb(0,0,110) 180.00deg,rgb(0,0,104) 180.37deg,rgb(0,0,98) 180.74deg,rgb(0,0,92) 181.11deg,rgb(0,0,86) 181.48deg,rgb(0,0,80) 181.85deg,rgb(0,0,74) 182.22deg,rgb(0,0,68) 182.59deg,rgb(0,0,63) 182.96deg,rgb(0,0,57) 183.33deg,rgb(0,0,52) 183.70deg,rgb(0,0,46) 184.07deg,rgb(0,0,41) 184.44deg,rgb(0,0,36) 184.81deg,rgb(0,0,30) 185.18deg,rgb(0,0,25) 185.55deg,rgb(0,0,20) 185.91deg,rgb(0,0,15) 186.28deg,rgb(0,0,10) 186.65deg,rgb(0,0,5) 187.02deg,rgb(0,0,0) 187.39deg),rgb(0,255,0);background-blend-mode:screen,screen,normal;"></div><div class="f" style="clip-path:polygon(210.4px 104.7px,212.1px 105.7px,-3735.8px 761.8px,-162.8px 4089.3px,3044.9px 2928.9px,209.3px 104.8px);background:conic-gradient(from 332.84deg at 132.64px 29.48px,rgb(255,0,0) 162.04deg,rgb(245,0,0) 162.94deg,rgb(235,0,0) 163.83deg,rgb(226,0,0) 164.73deg,rgb(216,0,0) 165.63deg,rgb(208,0,0) 166.53deg,rgb(199,0,0) 167.43deg,rgb(191,0,0) 168.33deg,rgb(183,0,0) 169.22deg,rgb(175,0,0) 170.12deg,rgb(167,0,0) 171.02deg,rgb(160,0,0) 171.92deg,rgb(153,0,0) 172.82deg,rgb(146,0,0) 173.71deg,rgb(139,0,0) 174.61deg,rgb(132,0,0) 175.51deg,rgb(126,0,0) 176.41deg,rgb(119,0,0) 177.31deg,rgb(113,0,0) 178.20deg,rgb(107,0,0) 179.10deg,rgb(101,0,0) 180.00deg,rgb(95,0,0) 180.90deg,rgb(90,0,0) 181.80deg,rgb(84,0,0) 182.69deg,rgb(78,0,0) 183.59deg,rgb(73,0,0) 184.49deg,rgb(68,0,0) 185.39deg,rgb(62,0,0) 186.29deg,rgb(57,0,0) 187.18deg,rgb(52,0,0) 188.08deg,rgb(47,0,0) 188.98deg,rgb(42,0,0) 189.88deg,rgb(37,0,0) 190.78deg,rgb(32,0,0) 191.67deg,rgb(28,0,0) 192.57deg,rgb(23,0,0) 193.47deg,rgb(18,0,0) 194.37deg,rgb(14,0,0) 195.27deg,rgb(9,0,0) 196.17deg,rgb(4,0,0) 197.06deg,rgb(0,0,0) 197.96deg),conic-gradient(from 62.48deg at 479.55px 61.98px,rgb(0,0,0) 161.92deg,rgb(0,2,0) 162.82deg,rgb(0,5,0) 163.73deg,rgb(0,7,0) 164.63deg,rgb(0,9,0) 165.53deg,rgb(0,12,0) 166.44deg,rgb(0,15,0) 167.34deg,rgb(0,17,0) 168.25deg,rgb(0,20,0) 169.15deg,rgb(0,23,0) 170.05deg,rgb(0,26,0) 170.96deg,rgb(0,29,0) 171.86deg,rgb(0,32,0) 172.77deg,rgb(0,36,0) 173.67deg,rgb(0,39,0) 174.58deg,rgb(0,43,0) 175.48deg,rgb(0,46,0) 176.38deg,rgb(0,50,0) 177.29deg,rgb(0,54,0) 178.19deg,rgb(0,59,0) 179.10deg,rgb(0,63,0) 180.00deg,rgb(0,68,0) 180.90deg,rgb(0,73,0) 181.81deg,rgb(0,78,0) 182.71deg,rgb(0,83,0) 183.62deg,rgb(0,89,0) 184.52deg,rgb(0,95,0) 185.42deg,rgb(0,102,0) 186.33deg,rgb(0,109,0) 187.23deg,rgb(0,116,0) 188.14deg,rgb(0,124,0) 189.04deg,rgb(0,133,0) 189.95deg,rgb(0,142,0) 190.85deg,rgb(0,152,0) 191.75deg,rgb(0,163,0) 192.66deg,rgb(0,175,0) 193.56deg,rgb(0,188,0) 194.47deg,rgb(0,202,0) 195.37deg,rgb(0,218,0) 196.27deg,rgb(0,235,0) 197.18deg,rgb(0,255,0) 198.08deg),rgb(0,0,255);background-blend-mode:screen,screen,normal;"></div><div class="f" style="background:rgba(0,0,0,.4)"></div></div></div><div style="left:0;top:0;width:700px;height:491px;filter:blur(0.6px);"><div class="f" style="clip-path:polygon(132.6px 29.5px,479.5px 62.0px,186.4px 361.4px)"><div class="f" style="clip-path:polygon(208.2px 107.1px,208.3px 105.8px,3043.9px 2929.9px,4156.1px -549.0px,582.5px -3875.9px,209.3px 108.7px);background:conic-gradient(from 204.87deg at 186.36px 361.38px,rgb(0,255,0) 160.48deg,rgb(0,234,0) 161.45deg,rgb(0,216,0) 162.43deg,rgb(0,200,0) 163.40deg,rgb(0,185,0) 164.38deg,rgb(0,172,0) 165.36deg,rgb(0,160,0) 166.33deg,rgb(0,149,0) 167.31deg,rgb(0,139,0) 168.29deg,rgb(0,129,0) 169.26deg,rgb(0,121,0) 170.24deg,rgb(0,113,0) 171.21deg,rgb(0,106,0) 172.19deg,rgb(0,99,0) 173.17deg,rgb(0,92,0) 174.14deg,rgb(0,86,0) 175.12deg,rgb(0,80,0) 176.10deg,rgb(0,75,0) 177.07deg,rgb(0,70,0) 178.05deg,rgb(0,65,0) 179.02deg,rgb(0,61,0) 180.00deg,rgb(0,56,0) 180.98deg,rgb(0,52,0) 181.95deg,rgb(0,48,0) 182.93deg,rgb(0,44,0) 183.90deg,rgb(0,41,0) 184.88deg,rgb(0,37,0) 185.86deg,rgb(0,34,0) 186.83deg,rgb(0,31,0) 187.81deg,rgb(0,28,0) 188.79deg,rgb(0,25,0) 189.76deg,rgb(0,22,0) 190.74deg,rgb(0,19,0) 191.71deg,rgb(0,17,0) 192.69deg,rgb(0,14,0) 193.67deg,rgb(0,12,0) 194.64deg,rgb(0,9,0) 195.62deg,rgb(0,7,0) 196.60deg,rgb(0,4,0) 197.57deg,rgb(0,2,0) 198.55deg,rgb(0,0,0) 199.52deg),conic-gradient(from 295.12deg at 132.64px 29.48px,rgb(0,0,0) 160.23deg,rgb(0,0,4) 161.22deg,rgb(0,0,8) 162.21deg,rgb(0,0,13) 163.20deg,rgb(0,0,17) 164.19deg,rgb(0,0,21) 165.18deg,rgb(0,0,26) 166.16deg,rgb(0,0,30) 167.15deg,rgb(0,0,35) 168.14deg,rgb(0,0,40) 169.13deg,rgb(0,0,44) 170.12deg,rgb(0,0,49) 171.11deg,rgb(0,0,54) 172.09deg,rgb(0,0,59) 173.08deg,rgb(0,0,64) 174.07deg,rgb(0,0,69) 175.06deg,rgb(0,0,74) 176.05deg,rgb(0,0,80) 177.04deg,rgb(0,0,85) 178.02deg,rgb(0,0,91) 179.01deg,rgb(0,0,96) 180.00deg,rgb(0,0,102) 180.99deg,rgb(0,0,108) 181.98deg,rgb(0,0,114) 182.96deg,rgb(0,0,120) 183.95deg,rgb(0,0,127) 184.94deg,rgb(0,0,134) 185.93deg,rgb(0,0,140) 186.92deg,rgb(0,0,147) 187.91deg,rgb(0,0,155) 188.89deg,rgb(0,0,162) 189.88deg,rgb(0,0,170) 190.87deg,rgb(0,0,178) 191.86deg,rgb(0,0,186) 192.85deg,rgb(0,0,195) 193.84deg,rgb(0,0,204) 194.82deg,rgb(0,0,213) 195.81deg,rgb(0,0,223) 196.80deg,rgb(0,0,233) 197.79deg,rgb(0,0,244) 198.78deg,rgb(0,0,255) 199.77deg),rgb(255,0,0);background-blend-mode:screen,screen,normal;"></div><div class="f" style="clip-path:polygon(211.6px 108.1px,210.7px 108.8px,583.9px -3875.8px,-2624.0px -2715.9px,-3735.6px 763.2px,212.3px 107.1px);background:conic-gradient(from 178.08deg at 186.36px 361.38px,rgb(0,0,0) 172.73deg,rgb(5,0,0) 173.09deg,rgb(10,0,0) 173.45deg,rgb(15,0,0) 173.82deg,rgb(21,0,0) 174.18deg,rgb(26,0,0) 174.55deg,rgb(31,0,0) 174.91deg,rgb(37,0,0) 175.27deg,rgb(42,0,0) 175.64deg,rgb(47,0,0) 176.00deg,rgb(53,0,0) 176.36deg,rgb(59,0,0) 176.73deg,rgb(64,0,0) 177.09deg,rgb(70,0,0) 177.45deg,rgb(76,0,0) 177.82deg,rgb(82,0,0) 178.18deg,rgb(88,0,0) 178.55deg,rgb(94,0,0) 178.91deg,rgb(100,0,0) 179.27deg,rgb(106,0,0) 179.64deg,rgb(112,0,0) 180.00deg,rgb(118,0,0) 180.36deg,rgb(125,0,0) 180.73deg,rgb(131,0,0) 181.09deg,rgb(138,0,0) 181.45deg,rgb(144,0,0) 181.82deg,rgb(151,0,0) 182.18deg,rgb(158,0,0) 182.55deg,rgb(165,0,0) 182.91deg,rgb(171,0,0) 183.27deg,rgb(179,0,0) 183.64deg,rgb(186,0,0) 184.00deg,rgb(193,0,0) 184.36deg,rgb(200,0,0) 184.73deg,rgb(208,0,0) 185.09deg,rgb(215,0,0) 185.45deg,rgb(223,0,0) 185.82deg,rgb(231,0,0) 186.18deg,rgb(239,0,0) 186.55deg,rgb(247,0,0) 186.91deg,rgb(255,0,0) 187.27deg),conic-gradient(from 87.96deg at 479.55px 61.98px,rgb(0,0,255) 172.61deg,rgb(0,0,247) 172.98deg,rgb(0,0,238) 173.35deg,rgb(0,0,230) 173.72deg,rgb(0,0,222) 174.09deg,rgb(0,0,214) 174.45deg,rgb(0,0,207) 174.82deg,rgb(0,0,199) 175.19deg,rgb(0,0,192) 175.56deg,rgb(0,0,184) 175.93deg,rgb(0,0,177) 176.30deg,rgb(0,0,170) 176.67deg,rgb(0,0,163) 177.04deg,rgb(0,0,156) 177.41deg,rgb(0,0,149) 177.78deg,rgb(0,0,142) 178.15deg,rgb(0,0,136) 178.52deg,rgb(0,0,129) 178.89deg,rgb(0,0,123) 179.26deg,rgb(0,0,116) 179.63deg,rgb(0,0,110) 180.00deg,rgb(0,0,104) 180.37deg,rgb(0,0,98) 180.74deg,rgb(0,0,92) 181.11deg,rgb(0,0,86) 181.48deg,rgb(0,0,80) 181.85deg,rgb(0,0,74) 182.22deg,rgb(0,0,68) 182.59deg,rgb(0,0,63) 182.96deg,rgb(0,0,57) 183.33deg,rgb(0,0,52) 183.70deg,rgb(0,0,46) 184.07deg,rgb(0,0,41) 184.44deg,rgb(0,0,36) 184.81deg,rgb(0,0,30) 185.18deg,rgb(0,0,25) 185.55deg,rgb(0,0,20) 185.91deg,rgb(0,0,15) 186.28deg,rgb(0,0,10) 186.65deg,rgb(0,0,5) 187.02deg,rgb(0,0,0) 187.39deg),rgb(0,255,0);background-blend-mode:screen,screen,normal;"></div><div class="f" style="clip-path:polygon(210.4px 104.7px,212.1px 105.7px,-3735.8px 761.8px,-162.8px 4089.3px,3044.9px 2928.9px,209.3px 104.8px);background:conic-gradient(from 332.84deg at 132.64px 29.48px,rgb(255,0,0) 162.04deg,rgb(245,0,0) 162.94deg,rgb(235,0,0) 163.83deg,rgb(226,0,0) 164.73deg,rgb(216,0,0) 165.63deg,rgb(208,0,0) 166.53deg,rgb(199,0,0) 167.43deg,rgb(191,0,0) 168.33deg,rgb(183,0,0) 169.22deg,rgb(175,0,0) 170.12deg,rgb(167,0,0) 171.02deg,rgb(160,0,0) 171.92deg,rgb(153,0,0) 172.82deg,rgb(146,0,0) 173.71deg,rgb(139,0,0) 174.61deg,rgb(132,0,0) 175.51deg,rgb(126,0,0) 176.41deg,rgb(119,0,0) 177.31deg,rgb(113,0,0) 178.20deg,rgb(107,0,0) 179.10deg,rgb(101,0,0) 180.00deg,rgb(95,0,0) 180.90deg,rgb(90,0,0) 181.80deg,rgb(84,0,0) 182.69deg,rgb(78,0,0) 183.59deg,rgb(73,0,0) 184.49deg,rgb(68,0,0) 185.39deg,rgb(62,0,0) 186.29deg,rgb(57,0,0) 187.18deg,rgb(52,0,0) 188.08deg,rgb(47,0,0) 188.98deg,rgb(42,0,0) 189.88deg,rgb(37,0,0) 190.78deg,rgb(32,0,0) 191.67deg,rgb(28,0,0) 192.57deg,rgb(23,0,0) 193.47deg,rgb(18,0,0) 194.37deg,rgb(14,0,0) 195.27deg,rgb(9,0,0) 196.17deg,rgb(4,0,0) 197.06deg,rgb(0,0,0) 197.96deg),conic-gradient(from 62.48deg at 479.55px 61.98px,rgb(0,0,0) 161.92deg,rgb(0,2,0) 162.82deg,rgb(0,5,0) 163.73deg,rgb(0,7,0) 164.63deg,rgb(0,9,0) 165.53deg,rgb(0,12,0) 166.44deg,rgb(0,15,0) 167.34deg,rgb(0,17,0) 168.25deg,rgb(0,20,0) 169.15deg,rgb(0,23,0) 170.05deg,rgb(0,26,0) 170.96deg,rgb(0,29,0) 171.86deg,rgb(0,32,0) 172.77deg,rgb(0,36,0) 173.67deg,rgb(0,39,0) 174.58deg,rgb(0,43,0) 175.48deg,rgb(0,46,0) 176.38deg,rgb(0,50,0) 177.29deg,rgb(0,54,0) 178.19deg,rgb(0,59,0) 179.10deg,rgb(0,63,0) 180.00deg,rgb(0,68,0) 180.90deg,rgb(0,73,0) 181.81deg,rgb(0,78,0) 182.71deg,rgb(0,83,0) 183.62deg,rgb(0,89,0) 184.52deg,rgb(0,95,0) 185.42deg,rgb(0,102,0) 186.33deg,rgb(0,109,0) 187.23deg,rgb(0,116,0) 188.14deg,rgb(0,124,0) 189.04deg,rgb(0,133,0) 189.95deg,rgb(0,142,0) 190.85deg,rgb(0,152,0) 191.75deg,rgb(0,163,0) 192.66deg,rgb(0,175,0) 193.56deg,rgb(0,188,0) 194.47deg,rgb(0,202,0) 195.37deg,rgb(0,218,0) 196.27deg,rgb(0,235,0) 197.18deg,rgb(0,255,0) 198.08deg),rgb(0,0,255);background-blend-mode:screen,screen,normal;"></div></div></div>
<svg style="left:0;top:0" width="640" height="491"><rect x="125.8" y="22.7" width="13.6" height="13.6" fill="none" stroke="#fff" stroke-opacity=".82" stroke-width="1.6"/><rect x="149.7" y="46.6" width="13.6" height="13.6" fill="none" stroke="#fff" stroke-opacity=".82" stroke-width="1.6"/><rect x="189.9" y="38.7" width="13.6" height="13.6" fill="none" stroke="#fff" stroke-opacity=".82" stroke-width="1.6"/><rect x="209.7" y="30.8" width="13.6" height="13.6" fill="none" stroke="#fff" stroke-opacity=".82" stroke-width="1.6"/><rect x="236.6" y="34.7" width="13.6" height="13.6" fill="none" stroke="#fff" stroke-opacity=".82" stroke-width="1.6"/><rect x="268.7" y="41.6" width="13.6" height="13.6" fill="none" stroke="#fff" stroke-opacity=".82" stroke-width="1.6"/><rect x="186.7" y="60.8" width="13.6" height="13.6" fill="none" stroke="#fff" stroke-opacity=".82" stroke-width="1.6"/><rect x="251.8" y="74.8" width="13.6" height="13.6" fill="none" stroke="#fff" stroke-opacity=".82" stroke-width="1.6"/><rect x="240.7" y="80.8" width="13.6" height="13.6" fill="none" stroke="#fff" stroke-opacity=".82" stroke-width="1.6"/><rect x="156.7" y="91.5" width="13.6" height="13.6" fill="none" stroke="#fff" stroke-opacity=".82" stroke-width="1.6"/><rect x="140.6" y="110.7" width="13.6" height="13.6" fill="none" stroke="#fff" stroke-opacity=".82" stroke-width="1.6"/><rect x="145.6" y="142.6" width="13.6" height="13.6" fill="none" stroke="#fff" stroke-opacity=".82" stroke-width="1.6"/><rect x="179.8" y="139.6" width="13.6" height="13.6" fill="none" stroke="#fff" stroke-opacity=".82" stroke-width="1.6"/><rect x="200.2" y="144.8" width="13.6" height="13.6" fill="none" stroke="#fff" stroke-opacity=".82" stroke-width="1.6"/><rect x="235.7" y="162.7" width="13.6" height="13.6" fill="none" stroke="#fff" stroke-opacity=".82" stroke-width="1.6"/><rect x="182.6" y="193.7" width="13.6" height="13.6" fill="none" stroke="#fff" stroke-opacity=".82" stroke-width="1.6"/><rect x="297.7" y="133.7" width="13.6" height="13.6" fill="none" stroke="#fff" stroke-opacity=".82" stroke-width="1.6"/><rect x="311.7" y="45.5" width="13.6" height="13.6" fill="none" stroke="#fff" stroke-opacity=".82" stroke-width="1.6"/><rect x="472.7" y="55.1" width="13.6" height="13.6" fill="none" stroke="#fff" stroke-opacity=".82" stroke-width="1.6"/><rect x="391.7" y="75.7" width="13.6" height="13.6" fill="none" stroke="#fff" stroke-opacity=".82" stroke-width="1.6"/><rect x="330.8" y="87.6" width="13.6" height="13.6" fill="none" stroke="#fff" stroke-opacity=".82" stroke-width="1.6"/><rect x="182.6" y="242.8" width="13.6" height="13.6" fill="none" stroke="#fff" stroke-opacity=".82" stroke-width="1.6"/><rect x="317.6" y="212.7" width="13.6" height="13.6" fill="none" stroke="#fff" stroke-opacity=".82" stroke-width="1.6"/><rect x="179.7" y="354.6" width="13.6" height="13.6" fill="none" stroke="#fff" stroke-opacity=".82" stroke-width="1.6"/><rect x="203.2" y="100.2" width="12.6" height="12.6" fill="none" stroke="#000" stroke-width="2.2"/><circle cx="130.9" cy="31.9" r="4.15" fill="#00ff00" stroke="#0c0c0c" stroke-width="1.3"/><circle cx="152.4" cy="56.4" r="4.15" fill="#5a8a4a" stroke="#0c0c0c" stroke-width="1.3"/><circle cx="191.9" cy="47.0" r="4.15" fill="#a0b050" stroke="#0c0c0c" stroke-width="1.3"/><circle cx="214.0" cy="38.8" r="4.15" fill="#ffff00" stroke="#0c0c0c" stroke-width="1.3"/><circle cx="240.9" cy="42.8" r="4.15" fill="#e0c030" stroke="#0c0c0c" stroke-width="1.3"/><circle cx="269.5" cy="48.4" r="4.15" fill="#e0a030" stroke="#0c0c0c" stroke-width="1.3"/><circle cx="188.0" cy="71.4" r="4.15" fill="#5a6a40" stroke="#0c0c0c" stroke-width="1.3"/><circle cx="256.1" cy="86.2" r="4.15" fill="#6a5040" stroke="#0c0c0c" stroke-width="1.3"/><circle cx="239.5" cy="94.5" r="4.15" fill="#c09a88" stroke="#0c0c0c" stroke-width="1.3"/><circle cx="158.0" cy="110.9" r="4.15" fill="#70b0a0" stroke="#0c0c0c" stroke-width="1.3"/><circle cx="203.0" cy="118.3" r="4.15" fill="#909090" stroke="#0c0c0c" stroke-width="1.3"/><circle cx="203.0" cy="116.3" r="4.15" fill="#a8a8a0" stroke="#0c0c0c" stroke-width="1.3"/><circle cx="141.4" cy="127.9" r="4.15" fill="#00ffff" stroke="#0c0c0c" stroke-width="1.3"/><circle cx="146.0" cy="163.9" r="4.15" fill="#208a9a" stroke="#0c0c0c" stroke-width="1.3"/><circle cx="175.5" cy="161.5" r="4.15" fill="#7088a8" stroke="#0c0c0c" stroke-width="1.3"/><circle cx="197.4" cy="164.0" r="4.15" fill="#9088b0" stroke="#0c0c0c" stroke-width="1.3"/><circle cx="229.0" cy="184.5" r="4.15" fill="#604870" stroke="#0c0c0c" stroke-width="1.3"/><circle cx="177.0" cy="216.7" r="4.15" fill="#5868a8" stroke="#0c0c0c" stroke-width="1.3"/><circle cx="293.0" cy="154.5" r="4.15" fill="#b06090" stroke="#0c0c0c" stroke-width="1.3"/><circle cx="199.0" cy="139.5" r="4.15" fill="#000" stroke="#0c0c0c" stroke-width="1.3"/><circle cx="316.9" cy="52.5" r="4.15" fill="#e09040" stroke="#0c0c0c" stroke-width="1.3"/><circle cx="479.0" cy="60.6" r="4.15" fill="#ff0000" stroke="#0c0c0c" stroke-width="1.3"/><circle cx="403.0" cy="83.9" r="4.15" fill="#c04050" stroke="#0c0c0c" stroke-width="1.3"/><circle cx="333.4" cy="98.9" r="4.15" fill="#c06070" stroke="#0c0c0c" stroke-width="1.3"/><circle cx="174.5" cy="265.0" r="4.15" fill="#4050a0" stroke="#0c0c0c" stroke-width="1.3"/><circle cx="298.0" cy="229.4" r="4.15" fill="#ff00ff" stroke="#0c0c0c" stroke-width="1.3"/><circle cx="169.0" cy="348.9" r="4.15" fill="#0000ff" stroke="#0c0c0c" stroke-width="1.3"/></svg>
<div style="left:436.1px;top:320.2px;width:196.0px;height:128.4px;overflow:hidden;background:#262626;box-shadow:0 0 0 1.1px #8e8e8e,0 0 4px 2px rgba(0,0,0,.45)">
<div style="left:0;top:0;width:197px;height:129px;"><div class="f" style="clip-path:polygon(-873.0px 1365.0px,-876.2px 1365.5px,-883.7px 1364.7px,-893.6px 1360.0px,-911.4px 1349.6px,-924.5px 1342.1px,-942.3px 1332.0px,-964.5px 1319.0px,-992.2px 1300.8px,-1025.8px 1274.2px,-1071.0px 1227.7px,-1128.4px 1152.3px,-1200.9px 1033.0px,-1290.4px 856.2px,-1382.6px 611.0px,-1469.4px 305.0px,-1530.0px -21.9px,-1547.0px -324.5px,-1507.4px -572.5px,-1408.4px -733.2px,-1268.2px -789.9px,-1110.2px -770.1px,-949.8px -717.4px,-798.5px -654.2px,-653.2px -583.2px,-509.9px -505.2px,-368.1px -422.0px,-226.7px -335.2px,-85.0px -245.7px,56.0px -155.0px,196.2px -64.2px,333.6px 25.5px,467.1px 112.8px,595.0px 196.5px,715.4px 275.1px,825.1px 347.1px,920.5px 409.5px,1004.4px 464.3px,1074.1px 509.6px,1130.8px 546.8px,1175.9px 576.4px,1240.9px 618.8px,1284.8px 647.6px,1312.5px 665.6px,1328.4px 676.0px,1341.8px 684.8px,1347.0px 688.2px)"><div class="f" style="clip-path:polygon(-326.1px 522.6px,-325.0px 520.6px,-40.1px 4512.5px,3675.9px 514.6px,2385.5px -2419.8px,-326.0px 523.6px);background:conic-gradient(from 236.38deg at -968.43px 1221.98px,rgb(0,255,0) 166.27deg,rgb(0,241,0) 166.96deg,rgb(0,228,0) 167.64deg,rgb(0,216,0) 168.33deg,rgb(0,204,0) 169.02deg,rgb(0,193,0) 169.70deg,rgb(0,183,0) 170.39deg,rgb(0,173,0) 171.08deg,rgb(0,164,0) 171.76deg,rgb(0,155,0) 172.45deg,rgb(0,147,0) 173.14deg,rgb(0,139,0) 173.82deg,rgb(0,131,0) 174.51deg,rgb(0,124,0) 175.19deg,rgb(0,117,0) 175.88deg,rgb(0,110,0) 176.57deg,rgb(0,104,0) 177.25deg,rgb(0,97,0) 177.94deg,rgb(0,92,0) 178.63deg,rgb(0,86,0) 179.31deg,rgb(0,80,0) 180.00deg,rgb(0,75,0) 180.69deg,rgb(0,70,0) 181.37deg,rgb(0,65,0) 182.06deg,rgb(0,60,0) 182.75deg,rgb(0,56,0) 183.43deg,rgb(0,51,0) 184.12deg,rgb(0,47,0) 184.81deg,rgb(0,43,0) 185.49deg,rgb(0,38,0) 186.18deg,rgb(0,34,0) 186.86deg,rgb(0,31,0) 187.55deg,rgb(0,27,0) 188.24deg,rgb(0,23,0) 188.92deg,rgb(0,20,0) 189.61deg,rgb(0,16,0) 190.30deg,rgb(0,13,0) 190.98deg,rgb(0,9,0) 191.67deg,rgb(0,6,0) 192.36deg,rgb(0,3,0) 193.04deg,rgb(0,0,0) 193.73deg),conic-gradient(from 326.73deg at -374.43px -182.02px,rgb(0,0,0) 150.81deg,rgb(0,0,3) 152.27deg,rgb(0,0,7) 153.73deg,rgb(0,0,11) 155.19deg,rgb(0,0,14) 156.65deg,rgb(0,0,18) 158.11deg,rgb(0,0,21) 159.57deg,rgb(0,0,25) 161.03deg,rgb(0,0,29) 162.49deg,rgb(0,0,32) 163.95deg,rgb(0,0,36) 165.40deg,rgb(0,0,40) 166.86deg,rgb(0,0,44) 168.32deg,rgb(0,0,48) 169.78deg,rgb(0,0,52) 171.24deg,rgb(0,0,57) 172.70deg,rgb(0,0,61) 174.16deg,rgb(0,0,66) 175.62deg,rgb(0,0,70) 177.08deg,rgb(0,0,75) 178.54deg,rgb(0,0,80) 180.00deg,rgb(0,0,85) 181.46deg,rgb(0,0,90) 182.92deg,rgb(0,0,96) 184.38deg,rgb(0,0,101) 185.84deg,rgb(0,0,107) 187.30deg,rgb(0,0,114) 188.76deg,rgb(0,0,120) 190.22deg,rgb(0,0,127) 191.68deg,rgb(0,0,134) 193.14deg,rgb(0,0,142) 194.60deg,rgb(0,0,150) 196.05deg,rgb(0,0,158) 197.51deg,rgb(0,0,167) 198.97deg,rgb(0,0,177) 200.43deg,rgb(0,0,188) 201.89deg,rgb(0,0,199) 203.35deg,rgb(0,0,211) 204.81deg,rgb(0,0,225) 206.27deg,rgb(0,0,239) 207.73deg,rgb(0,0,255) 209.19deg),rgb(255,0,0);background-blend-mode:screen,screen,normal;"></div><div class="f" style="clip-path:polygon(-324.0px 524.6px,-325.0px 524.5px,2386.5px -2418.9px,-608.9px -3467.3px,-4324.1px 531.3px,-322.1px 523.3px);background:conic-gradient(from 212.79deg at -968.43px 1221.98px,rgb(0,0,0) 170.14deg,rgb(4,0,0) 170.63deg,rgb(8,0,0) 171.13deg,rgb(13,0,0) 171.62deg,rgb(17,0,0) 172.11deg,rgb(21,0,0) 172.61deg,rgb(26,0,0) 173.10deg,rgb(30,0,0) 173.59deg,rgb(35,0,0) 174.08deg,rgb(40,0,0) 174.58deg,rgb(45,0,0) 175.07deg,rgb(49,0,0) 175.56deg,rgb(54,0,0) 176.06deg,rgb(60,0,0) 176.55deg,rgb(65,0,0) 177.04deg,rgb(70,0,0) 177.54deg,rgb(76,0,0) 178.03deg,rgb(81,0,0) 178.52deg,rgb(87,0,0) 179.01deg,rgb(93,0,0) 179.51deg,rgb(98,0,0) 180.00deg,rgb(104,0,0) 180.49deg,rgb(111,0,0) 180.99deg,rgb(117,0,0) 181.48deg,rgb(124,0,0) 181.97deg,rgb(130,0,0) 182.46deg,rgb(137,0,0) 182.96deg,rgb(144,0,0) 183.45deg,rgb(151,0,0) 183.94deg,rgb(159,0,0) 184.44deg,rgb(166,0,0) 184.93deg,rgb(174,0,0) 185.42deg,rgb(182,0,0) 185.92deg,rgb(190,0,0) 186.41deg,rgb(199,0,0) 186.90deg,rgb(207,0,0) 187.39deg,rgb(216,0,0) 187.89deg,rgb(225,0,0) 188.38deg,rgb(235,0,0) 188.87deg,rgb(245,0,0) 189.37deg,rgb(255,0,0) 189.86deg),conic-gradient(from 103.71deg at 971.97px 519.98px,rgb(0,0,255) 166.17deg,rgb(0,0,241) 166.87deg,rgb(0,0,228) 167.56deg,rgb(0,0,216) 168.25deg,rgb(0,0,204) 168.94deg,rgb(0,0,193) 169.63deg,rgb(0,0,183) 170.32deg,rgb(0,0,173) 171.01deg,rgb(0,0,164) 171.70deg,rgb(0,0,155) 172.40deg,rgb(0,0,147) 173.09deg,rgb(0,0,139) 173.78deg,rgb(0,0,131) 174.47deg,rgb(0,0,124) 175.16deg,rgb(0,0,117) 175.85deg,rgb(0,0,110) 176.54deg,rgb(0,0,104) 177.23deg,rgb(0,0,97) 177.93deg,rgb(0,0,91) 178.62deg,rgb(0,0,86) 179.31deg,rgb(0,0,80) 180.00deg,rgb(0,0,75) 180.69deg,rgb(0,0,70) 181.38deg,rgb(0,0,65) 182.07deg,rgb(0,0,60) 182.77deg,rgb(0,0,56) 183.46deg,rgb(0,0,51) 184.15deg,rgb(0,0,47) 184.84deg,rgb(0,0,42) 185.53deg,rgb(0,0,38) 186.22deg,rgb(0,0,34) 186.91deg,rgb(0,0,31) 187.60deg,rgb(0,0,27) 188.30deg,rgb(0,0,23) 188.99deg,rgb(0,0,20) 189.68deg,rgb(0,0,16) 190.37deg,rgb(0,0,13) 191.06deg,rgb(0,0,9) 191.75deg,rgb(0,0,6) 192.44deg,rgb(0,0,3) 193.13deg,rgb(0,0,0) 193.83deg),rgb(0,255,0);background-blend-mode:screen,screen,normal;"></div><div class="f" style="clip-path:polygon(-322.8px 521.1px,-322.1px 521.9px,-4324.1px 529.9px,-3034.3px 3464.5px,-38.7px 4512.4px,-323.6px 520.5px);background:conic-gradient(from 9.42deg at -374.43px -182.02px,rgb(255,0,0) 166.49deg,rgb(247,0,0) 167.17deg,rgb(240,0,0) 167.84deg,rgb(232,0,0) 168.52deg,rgb(225,0,0) 169.19deg,rgb(218,0,0) 169.87deg,rgb(210,0,0) 170.54deg,rgb(203,0,0) 171.22deg,rgb(196,0,0) 171.90deg,rgb(189,0,0) 172.57deg,rgb(182,0,0) 173.25deg,rgb(176,0,0) 173.92deg,rgb(169,0,0) 174.60deg,rgb(162,0,0) 175.27deg,rgb(156,0,0) 175.95deg,rgb(149,0,0) 176.62deg,rgb(143,0,0) 177.30deg,rgb(136,0,0) 177.97deg,rgb(130,0,0) 178.65deg,rgb(124,0,0) 179.32deg,rgb(117,0,0) 180.00deg,rgb(111,0,0) 180.68deg,rgb(105,0,0) 181.35deg,rgb(99,0,0) 182.03deg,rgb(93,0,0) 182.70deg,rgb(87,0,0) 183.38deg,rgb(81,0,0) 184.05deg,rgb(75,0,0) 184.73deg,rgb(69,0,0) 185.40deg,rgb(63,0,0) 186.08deg,rgb(57,0,0) 186.75deg,rgb(52,0,0) 187.43deg,rgb(46,0,0) 188.10deg,rgb(40,0,0) 188.78deg,rgb(34,0,0) 189.46deg,rgb(28,0,0) 190.13deg,rgb(23,0,0) 190.81deg,rgb(17,0,0) 191.48deg,rgb(11,0,0) 192.16deg,rgb(6,0,0) 192.83deg,rgb(0,0,0) 193.51deg),conic-gradient(from 80.00deg at 971.97px 519.98px,rgb(0,0,0) 170.11deg,rgb(0,4,0) 170.61deg,rgb(0,8,0) 171.10deg,rgb(0,13,0) 171.60deg,rgb(0,17,0) 172.09deg,rgb(0,21,0) 172.58deg,rgb(0,26,0) 173.08deg,rgb(0,30,0) 173.57deg,rgb(0,35,0) 174.07deg,rgb(0,40,0) 174.56deg,rgb(0,45,0) 175.06deg,rgb(0,50,0) 175.55deg,rgb(0,55,0) 176.05deg,rgb(0,60,0) 176.54deg,rgb(0,65,0) 177.03deg,rgb(0,70,0) 177.53deg,rgb(0,76,0) 178.02deg,rgb(0,81,0) 178.52deg,rgb(0,87,0) 179.01deg,rgb(0,93,0) 179.51deg,rgb(0,99,0) 180.00deg,rgb(0,105,0) 180.49deg,rgb(0,111,0) 180.99deg,rgb(0,117,0) 181.48deg,rgb(0,124,0) 181.98deg,rgb(0,130,0) 182.47deg,rgb(0,137,0) 182.97deg,rgb(0,144,0) 183.46deg,rgb(0,151,0) 183.95deg,rgb(0,159,0) 184.45deg,rgb(0,166,0) 184.94deg,rgb(0,174,0) 185.44deg,rgb(0,182,0) 185.93deg,rgb(0,190,0) 186.43deg,rgb(0,199,0) 186.92deg,rgb(0,207,0) 187.42deg,rgb(0,216,0) 187.91deg,rgb(0,225,0) 188.40deg,rgb(0,235,0) 188.90deg,rgb(0,245,0) 189.39deg,rgb(0,255,0) 189.89deg),rgb(0,0,255);background-blend-mode:screen,screen,normal;"></div><div class="f" style="background:rgba(0,0,0,.4)"></div></div></div><div style="left:0;top:0;width:197px;height:129px;"><div class="f" style="clip-path:polygon(-374.4px -182.0px,972.0px 520.0px,-968.4px 1222.0px)"><div class="f" style="clip-path:polygon(-326.1px 522.6px,-325.0px 520.6px,-40.1px 4512.5px,3675.9px 514.6px,2385.5px -2419.8px,-326.0px 523.6px);background:conic-gradient(from 236.38deg at -968.43px 1221.98px,rgb(0,255,0) 166.27deg,rgb(0,241,0) 166.96deg,rgb(0,228,0) 167.64deg,rgb(0,216,0) 168.33deg,rgb(0,204,0) 169.02deg,rgb(0,193,0) 169.70deg,rgb(0,183,0) 170.39deg,rgb(0,173,0) 171.08deg,rgb(0,164,0) 171.76deg,rgb(0,155,0) 172.45deg,rgb(0,147,0) 173.14deg,rgb(0,139,0) 173.82deg,rgb(0,131,0) 174.51deg,rgb(0,124,0) 175.19deg,rgb(0,117,0) 175.88deg,rgb(0,110,0) 176.57deg,rgb(0,104,0) 177.25deg,rgb(0,97,0) 177.94deg,rgb(0,92,0) 178.63deg,rgb(0,86,0) 179.31deg,rgb(0,80,0) 180.00deg,rgb(0,75,0) 180.69deg,rgb(0,70,0) 181.37deg,rgb(0,65,0) 182.06deg,rgb(0,60,0) 182.75deg,rgb(0,56,0) 183.43deg,rgb(0,51,0) 184.12deg,rgb(0,47,0) 184.81deg,rgb(0,43,0) 185.49deg,rgb(0,38,0) 186.18deg,rgb(0,34,0) 186.86deg,rgb(0,31,0) 187.55deg,rgb(0,27,0) 188.24deg,rgb(0,23,0) 188.92deg,rgb(0,20,0) 189.61deg,rgb(0,16,0) 190.30deg,rgb(0,13,0) 190.98deg,rgb(0,9,0) 191.67deg,rgb(0,6,0) 192.36deg,rgb(0,3,0) 193.04deg,rgb(0,0,0) 193.73deg),conic-gradient(from 326.73deg at -374.43px -182.02px,rgb(0,0,0) 150.81deg,rgb(0,0,3) 152.27deg,rgb(0,0,7) 153.73deg,rgb(0,0,11) 155.19deg,rgb(0,0,14) 156.65deg,rgb(0,0,18) 158.11deg,rgb(0,0,21) 159.57deg,rgb(0,0,25) 161.03deg,rgb(0,0,29) 162.49deg,rgb(0,0,32) 163.95deg,rgb(0,0,36) 165.40deg,rgb(0,0,40) 166.86deg,rgb(0,0,44) 168.32deg,rgb(0,0,48) 169.78deg,rgb(0,0,52) 171.24deg,rgb(0,0,57) 172.70deg,rgb(0,0,61) 174.16deg,rgb(0,0,66) 175.62deg,rgb(0,0,70) 177.08deg,rgb(0,0,75) 178.54deg,rgb(0,0,80) 180.00deg,rgb(0,0,85) 181.46deg,rgb(0,0,90) 182.92deg,rgb(0,0,96) 184.38deg,rgb(0,0,101) 185.84deg,rgb(0,0,107) 187.30deg,rgb(0,0,114) 188.76deg,rgb(0,0,120) 190.22deg,rgb(0,0,127) 191.68deg,rgb(0,0,134) 193.14deg,rgb(0,0,142) 194.60deg,rgb(0,0,150) 196.05deg,rgb(0,0,158) 197.51deg,rgb(0,0,167) 198.97deg,rgb(0,0,177) 200.43deg,rgb(0,0,188) 201.89deg,rgb(0,0,199) 203.35deg,rgb(0,0,211) 204.81deg,rgb(0,0,225) 206.27deg,rgb(0,0,239) 207.73deg,rgb(0,0,255) 209.19deg),rgb(255,0,0);background-blend-mode:screen,screen,normal;"></div><div class="f" style="clip-path:polygon(-324.0px 524.6px,-325.0px 524.5px,2386.5px -2418.9px,-608.9px -3467.3px,-4324.1px 531.3px,-322.1px 523.3px);background:conic-gradient(from 212.79deg at -968.43px 1221.98px,rgb(0,0,0) 170.14deg,rgb(4,0,0) 170.63deg,rgb(8,0,0) 171.13deg,rgb(13,0,0) 171.62deg,rgb(17,0,0) 172.11deg,rgb(21,0,0) 172.61deg,rgb(26,0,0) 173.10deg,rgb(30,0,0) 173.59deg,rgb(35,0,0) 174.08deg,rgb(40,0,0) 174.58deg,rgb(45,0,0) 175.07deg,rgb(49,0,0) 175.56deg,rgb(54,0,0) 176.06deg,rgb(60,0,0) 176.55deg,rgb(65,0,0) 177.04deg,rgb(70,0,0) 177.54deg,rgb(76,0,0) 178.03deg,rgb(81,0,0) 178.52deg,rgb(87,0,0) 179.01deg,rgb(93,0,0) 179.51deg,rgb(98,0,0) 180.00deg,rgb(104,0,0) 180.49deg,rgb(111,0,0) 180.99deg,rgb(117,0,0) 181.48deg,rgb(124,0,0) 181.97deg,rgb(130,0,0) 182.46deg,rgb(137,0,0) 182.96deg,rgb(144,0,0) 183.45deg,rgb(151,0,0) 183.94deg,rgb(159,0,0) 184.44deg,rgb(166,0,0) 184.93deg,rgb(174,0,0) 185.42deg,rgb(182,0,0) 185.92deg,rgb(190,0,0) 186.41deg,rgb(199,0,0) 186.90deg,rgb(207,0,0) 187.39deg,rgb(216,0,0) 187.89deg,rgb(225,0,0) 188.38deg,rgb(235,0,0) 188.87deg,rgb(245,0,0) 189.37deg,rgb(255,0,0) 189.86deg),conic-gradient(from 103.71deg at 971.97px 519.98px,rgb(0,0,255) 166.17deg,rgb(0,0,241) 166.87deg,rgb(0,0,228) 167.56deg,rgb(0,0,216) 168.25deg,rgb(0,0,204) 168.94deg,rgb(0,0,193) 169.63deg,rgb(0,0,183) 170.32deg,rgb(0,0,173) 171.01deg,rgb(0,0,164) 171.70deg,rgb(0,0,155) 172.40deg,rgb(0,0,147) 173.09deg,rgb(0,0,139) 173.78deg,rgb(0,0,131) 174.47deg,rgb(0,0,124) 175.16deg,rgb(0,0,117) 175.85deg,rgb(0,0,110) 176.54deg,rgb(0,0,104) 177.23deg,rgb(0,0,97) 177.93deg,rgb(0,0,91) 178.62deg,rgb(0,0,86) 179.31deg,rgb(0,0,80) 180.00deg,rgb(0,0,75) 180.69deg,rgb(0,0,70) 181.38deg,rgb(0,0,65) 182.07deg,rgb(0,0,60) 182.77deg,rgb(0,0,56) 183.46deg,rgb(0,0,51) 184.15deg,rgb(0,0,47) 184.84deg,rgb(0,0,42) 185.53deg,rgb(0,0,38) 186.22deg,rgb(0,0,34) 186.91deg,rgb(0,0,31) 187.60deg,rgb(0,0,27) 188.30deg,rgb(0,0,23) 188.99deg,rgb(0,0,20) 189.68deg,rgb(0,0,16) 190.37deg,rgb(0,0,13) 191.06deg,rgb(0,0,9) 191.75deg,rgb(0,0,6) 192.44deg,rgb(0,0,3) 193.13deg,rgb(0,0,0) 193.83deg),rgb(0,255,0);background-blend-mode:screen,screen,normal;"></div><div class="f" style="clip-path:polygon(-322.8px 521.1px,-322.1px 521.9px,-4324.1px 529.9px,-3034.3px 3464.5px,-38.7px 4512.4px,-323.6px 520.5px);background:conic-gradient(from 9.42deg at -374.43px -182.02px,rgb(255,0,0) 166.49deg,rgb(247,0,0) 167.17deg,rgb(240,0,0) 167.84deg,rgb(232,0,0) 168.52deg,rgb(225,0,0) 169.19deg,rgb(218,0,0) 169.87deg,rgb(210,0,0) 170.54deg,rgb(203,0,0) 171.22deg,rgb(196,0,0) 171.90deg,rgb(189,0,0) 172.57deg,rgb(182,0,0) 173.25deg,rgb(176,0,0) 173.92deg,rgb(169,0,0) 174.60deg,rgb(162,0,0) 175.27deg,rgb(156,0,0) 175.95deg,rgb(149,0,0) 176.62deg,rgb(143,0,0) 177.30deg,rgb(136,0,0) 177.97deg,rgb(130,0,0) 178.65deg,rgb(124,0,0) 179.32deg,rgb(117,0,0) 180.00deg,rgb(111,0,0) 180.68deg,rgb(105,0,0) 181.35deg,rgb(99,0,0) 182.03deg,rgb(93,0,0) 182.70deg,rgb(87,0,0) 183.38deg,rgb(81,0,0) 184.05deg,rgb(75,0,0) 184.73deg,rgb(69,0,0) 185.40deg,rgb(63,0,0) 186.08deg,rgb(57,0,0) 186.75deg,rgb(52,0,0) 187.43deg,rgb(46,0,0) 188.10deg,rgb(40,0,0) 188.78deg,rgb(34,0,0) 189.46deg,rgb(28,0,0) 190.13deg,rgb(23,0,0) 190.81deg,rgb(17,0,0) 191.48deg,rgb(11,0,0) 192.16deg,rgb(6,0,0) 192.83deg,rgb(0,0,0) 193.51deg),conic-gradient(from 80.00deg at 971.97px 519.98px,rgb(0,0,0) 170.11deg,rgb(0,4,0) 170.61deg,rgb(0,8,0) 171.10deg,rgb(0,13,0) 171.60deg,rgb(0,17,0) 172.09deg,rgb(0,21,0) 172.58deg,rgb(0,26,0) 173.08deg,rgb(0,30,0) 173.57deg,rgb(0,35,0) 174.07deg,rgb(0,40,0) 174.56deg,rgb(0,45,0) 175.06deg,rgb(0,50,0) 175.55deg,rgb(0,55,0) 176.05deg,rgb(0,60,0) 176.54deg,rgb(0,65,0) 177.03deg,rgb(0,70,0) 177.53deg,rgb(0,76,0) 178.02deg,rgb(0,81,0) 178.52deg,rgb(0,87,0) 179.01deg,rgb(0,93,0) 179.51deg,rgb(0,99,0) 180.00deg,rgb(0,105,0) 180.49deg,rgb(0,111,0) 180.99deg,rgb(0,117,0) 181.48deg,rgb(0,124,0) 181.98deg,rgb(0,130,0) 182.47deg,rgb(0,137,0) 182.97deg,rgb(0,144,0) 183.46deg,rgb(0,151,0) 183.95deg,rgb(0,159,0) 184.45deg,rgb(0,166,0) 184.94deg,rgb(0,174,0) 185.44deg,rgb(0,182,0) 185.93deg,rgb(0,190,0) 186.43deg,rgb(0,199,0) 186.92deg,rgb(0,207,0) 187.42deg,rgb(0,216,0) 187.91deg,rgb(0,225,0) 188.40deg,rgb(0,235,0) 188.90deg,rgb(0,245,0) 189.39deg,rgb(0,255,0) 189.89deg),rgb(0,0,255);background-blend-mode:screen,screen,normal;"></div></div></div>
<svg style="left:0;top:0" width="199" height="131"><rect x="91.2" y="57.0" width="13.6" height="13.6" fill="none" stroke="#fff" stroke-opacity=".85" stroke-width="1.5"/><circle cx="71.9" cy="68.5" r="3.9" fill="none" stroke="#111" stroke-width="1.05"/></svg>
</div>
<div style="left:383.00px;top:459.00px;width:253.00px;height:28.50px;background:#2e2e2e"></div>
</div>
<span class="t" style="left:1406.50px;top:585.00px;font-size:19.60px;color:#f4f4f4;">RGB Triplet: 255, 255, 0</span>
<div style="left:1020.00px;top:119.30px;width:641.20px;height:1.20px;background:#a0a0a0"></div>
<div style="left:1659.90px;top:119.30px;width:1.30px;height:492.50px;background:#a0a0a0"></div>
<div style="left:1020.10px;top:119.30px;width:1.25px;height:492.50px;background:#a0a0a0"></div>
<div style="left:1020.00px;top:610.40px;width:641.20px;height:1.40px;background:#aaa"></div>
<div style="left:1019.80px;top:611.30px;width:1.50px;height:6.50px;background:#c4c4c4"></div>
<span class="t" style="left:1016.19px;top:621.00px;font-size:14.20px;color:#ddd;transform:scaleX(1.0400);">0</span>
<div style="left:1015.00px;top:610.60px;width:5.00px;height:1.50px;background:#c4c4c4"></div>
<span class="t" style="left:1006.09px;top:606.00px;font-size:14.20px;color:#ddd;transform:scaleX(1.0400);">0</span>
<div style="left:1073.06px;top:611.30px;width:1.50px;height:6.50px;background:#c4c4c4"></div>
<span class="t" style="left:1059.19px;top:621.00px;font-size:14.20px;color:#ddd;transform:scaleX(1.0400);">0,05</span>
<div style="left:1015.00px;top:569.72px;width:5.00px;height:1.50px;background:#c4c4c4"></div>
<span class="t" style="left:985.56px;top:565.00px;font-size:14.20px;color:#ddd;transform:scaleX(1.0400);">0,05</span>
<div style="left:1126.31px;top:611.30px;width:1.50px;height:6.50px;background:#c4c4c4"></div>
<span class="t" style="left:1116.55px;top:621.00px;font-size:14.20px;color:#ddd;transform:scaleX(1.0400);">0,1</span>
<div style="left:1015.00px;top:528.84px;width:5.00px;height:1.50px;background:#c4c4c4"></div>
<span class="t" style="left:993.77px;top:524.00px;font-size:14.20px;color:#ddd;transform:scaleX(1.0400);">0,1</span>
<div style="left:1179.57px;top:611.30px;width:1.50px;height:6.50px;background:#c4c4c4"></div>
<span class="t" style="left:1165.70px;top:621.00px;font-size:14.20px;color:#ddd;transform:scaleX(1.0400);">0,15</span>
<div style="left:1015.00px;top:487.96px;width:5.00px;height:1.50px;background:#c4c4c4"></div>
<span class="t" style="left:985.56px;top:483.00px;font-size:14.20px;color:#ddd;transform:scaleX(1.0400);">0,15</span>
<div style="left:1232.82px;top:611.30px;width:1.50px;height:6.50px;background:#c4c4c4"></div>
<span class="t" style="left:1223.06px;top:621.00px;font-size:14.20px;color:#ddd;transform:scaleX(1.0400);">0,2</span>
<div style="left:1015.00px;top:447.08px;width:5.00px;height:1.50px;background:#c4c4c4"></div>
<span class="t" style="left:993.77px;top:442.00px;font-size:14.20px;color:#ddd;transform:scaleX(1.0400);">0,2</span>
<div style="left:1286.08px;top:611.30px;width:1.50px;height:6.50px;background:#c4c4c4"></div>
<span class="t" style="left:1272.21px;top:621.00px;font-size:14.20px;color:#ddd;transform:scaleX(1.0400);">0,25</span>
<div style="left:1015.00px;top:406.20px;width:5.00px;height:1.50px;background:#c4c4c4"></div>
<span class="t" style="left:985.56px;top:401.00px;font-size:14.20px;color:#ddd;transform:scaleX(1.0400);">0,25</span>
<div style="left:1339.33px;top:611.30px;width:1.50px;height:6.50px;background:#c4c4c4"></div>
<span class="t" style="left:1329.57px;top:621.00px;font-size:14.20px;color:#ddd;transform:scaleX(1.0400);">0,3</span>
<div style="left:1015.00px;top:365.32px;width:5.00px;height:1.50px;background:#c4c4c4"></div>
<span class="t" style="left:993.77px;top:360.00px;font-size:14.20px;color:#ddd;transform:scaleX(1.0400);">0,3</span>
<div style="left:1392.59px;top:611.30px;width:1.50px;height:6.50px;background:#c4c4c4"></div>
<span class="t" style="left:1378.72px;top:621.00px;font-size:14.20px;color:#ddd;transform:scaleX(1.0400);">0,35</span>
<div style="left:1015.00px;top:324.44px;width:5.00px;height:1.50px;background:#c4c4c4"></div>
<span class="t" style="left:985.56px;top:319.00px;font-size:14.20px;color:#ddd;transform:scaleX(1.0400);">0,35</span>
<div style="left:1445.84px;top:611.30px;width:1.50px;height:6.50px;background:#c4c4c4"></div>
<span class="t" style="left:1436.08px;top:621.00px;font-size:14.20px;color:#ddd;transform:scaleX(1.0400);">0,4</span>
<div style="left:1015.00px;top:283.56px;width:5.00px;height:1.50px;background:#c4c4c4"></div>
<span class="t" style="left:993.77px;top:278.00px;font-size:14.20px;color:#ddd;transform:scaleX(1.0400);">0,4</span>
<div style="left:1499.10px;top:611.30px;width:1.50px;height:6.50px;background:#c4c4c4"></div>
<span class="t" style="left:1485.23px;top:621.00px;font-size:14.20px;color:#ddd;transform:scaleX(1.0400);">0,45</span>
<div style="left:1015.00px;top:242.68px;width:5.00px;height:1.50px;background:#c4c4c4"></div>
<span class="t" style="left:985.56px;top:238.00px;font-size:14.20px;color:#ddd;transform:scaleX(1.0400);">0,45</span>
<div style="left:1552.35px;top:611.30px;width:1.50px;height:6.50px;background:#c4c4c4"></div>
<span class="t" style="left:1542.59px;top:621.00px;font-size:14.20px;color:#ddd;transform:scaleX(1.0400);">0,5</span>
<div style="left:1015.00px;top:201.80px;width:5.00px;height:1.50px;background:#c4c4c4"></div>
<span class="t" style="left:993.77px;top:197.00px;font-size:14.20px;color:#ddd;transform:scaleX(1.0400);">0,5</span>
<div style="left:1605.60px;top:611.30px;width:1.50px;height:6.50px;background:#c4c4c4"></div>
<span class="t" style="left:1591.74px;top:621.00px;font-size:14.20px;color:#ddd;transform:scaleX(1.0400);">0,55</span>
<div style="left:1015.00px;top:160.92px;width:5.00px;height:1.50px;background:#c4c4c4"></div>
<span class="t" style="left:985.56px;top:156.00px;font-size:14.20px;color:#ddd;transform:scaleX(1.0400);">0,55</span>
<div style="left:324.0px;top:660px;width:1344.5px;height:228px;overflow:hidden;background:#000">
<div style="left:0;top:1.5px;width:1400px;height:25.2px;background:linear-gradient(#2c2c2c,#262626 50%,#131313 52%,#181818)"></div>
<div style="left:0;top:26.70px;width:1400px;height:23.5px;background:#404040"></div>
<div style="left:0;top:50.05px;width:1400px;height:23.5px;background:#7b7b7b"></div>
<div style="left:0;top:73.40px;width:1400px;height:23.5px;background:#404040"></div>
<div style="left:0;top:96.75px;width:1400px;height:23.5px;background:#7b7b7b"></div>
<div style="left:0;top:120.10px;width:1400px;height:23.5px;background:#404040"></div>
<div style="left:0;top:143.45px;width:1400px;height:23.5px;background:#7b7b7b"></div>
<div style="left:0;top:166.80px;width:1400px;height:23.5px;background:#404040"></div>
<div style="left:0;top:190.15px;width:1400px;height:23.5px;background:#7b7b7b"></div>
<div style="left:0;top:0;width:1.6px;height:228px;background:#0a0a0a"></div>
<div style="left:0;top:213.6px;width:1400px;height:14.4px;background:#5e5e5e"></div>
<div style="left:22.3px;top:214.8px;width:637px;height:11.8px;background:#474747;border-radius:6px"></div>
<div style="left:2.2px;top:215px;width:16.5px;height:11.8px;background:#7c7c7c;border-radius:2.5px"></div>
<svg style="left:6px;top:216.6px" width="8" height="9"><path d="M7.5 0v9l-7-4.5z" fill="#3a3a3a"/></svg>
<div style="left:1330.5px;top:214.6px;width:14px;height:12px;background:#8a8a8a;border-radius:2px"></div>
<svg style="left:1334.0px;top:216.2px" width="8" height="9"><path d="M1 0v9l6.5-4.5z" fill="#333"/></svg>
<span class="t" style="left:15.50px;top:33.00px;font-size:14.80px;color:#f4f4f4;font-weight:700;transform:scaleX(1.2226);-webkit-text-stroke:.3px #f4f4f4;">x: CIE31</span>
<span class="t" style="left:15.50px;top:56.00px;font-size:14.80px;color:#f4f4f4;font-weight:700;transform:scaleX(1.2226);-webkit-text-stroke:.3px #f4f4f4;">y: CIE31</span>
<span class="t" style="left:15.50px;top:79.00px;font-size:14.80px;color:#f4f4f4;font-weight:700;transform:scaleX(1.1244);-webkit-text-stroke:.3px #f4f4f4;">Y</span>
<span class="t" style="left:16.20px;top:102.00px;font-size:14.80px;color:#f4f4f4;font-weight:700;transform:scaleX(1.2571);-webkit-text-stroke:.3px #f4f4f4;">Target x:CIE31</span>
<span class="t" style="left:16.20px;top:125.00px;font-size:14.80px;color:#f4f4f4;font-weight:700;transform:scaleX(1.2571);-webkit-text-stroke:.3px #f4f4f4;">Target y:CIE31</span>
<span class="t" style="left:16.20px;top:149.00px;font-size:14.80px;color:#f4f4f4;font-weight:700;transform:scaleX(1.2895);-webkit-text-stroke:.3px #f4f4f4;">Target Y</span>
<span class="t" style="left:15.50px;top:172.00px;font-size:14.80px;color:#f4f4f4;font-weight:700;transform:scaleX(1.2982);-webkit-text-stroke:.3px #f4f4f4;">ΔE 2000</span>
<span class="t" style="left:15.50px;top:195.00px;font-size:14.80px;color:#f4f4f4;font-weight:700;transform:scaleX(1.2426);-webkit-text-stroke:.3px #f4f4f4;">ΔE ITP</span>
<span class="t" style="left:171.86px;top:9.00px;font-size:13.90px;color:#f2f2f2;transform:scaleX(1.3229);">White</span>
<span class="t" style="left:167.00px;top:33.00px;font-size:14.60px;color:#f2f2f2;transform:scaleX(1.2700);">0,29</span>
<span class="t" style="left:167.00px;top:56.00px;font-size:14.60px;color:#f2f2f2;transform:scaleX(1.2700);">0,31</span>
<span class="t" style="left:167.00px;top:79.00px;font-size:14.60px;color:#f2f2f2;transform:scaleX(1.2700);">459,76</span>
<span class="t" style="left:167.00px;top:102.00px;font-size:14.60px;color:#f2f2f2;transform:scaleX(1.2700);">0,31</span>
<span class="t" style="left:167.00px;top:125.00px;font-size:14.60px;color:#f2f2f2;transform:scaleX(1.2700);">0,33</span>
<span class="t" style="left:167.00px;top:149.00px;font-size:14.60px;color:#f2f2f2;transform:scaleX(1.2700);">459,76</span>
<span class="t" style="left:167.00px;top:172.00px;font-size:14.60px;color:#f2f2f2;transform:scaleX(1.2700);">8,51</span>
<span class="t" style="left:167.00px;top:195.00px;font-size:14.60px;color:#f2f2f2;transform:scaleX(1.2700);">11,79</span>
<span class="t" style="left:233.60px;top:9.00px;font-size:13.90px;color:#f2f2f2;transform:scaleX(1.2257);">Gray 80</span>
<span class="t" style="left:233.60px;top:33.00px;font-size:14.60px;color:#f2f2f2;transform:scaleX(1.2700);">0,29</span>
<span class="t" style="left:233.60px;top:56.00px;font-size:14.60px;color:#f2f2f2;transform:scaleX(1.2700);">0,31</span>
<span class="t" style="left:233.60px;top:79.00px;font-size:14.60px;color:#f2f2f2;transform:scaleX(1.2700);">367,23</span>
<span class="t" style="left:233.60px;top:102.00px;font-size:14.60px;color:#f2f2f2;transform:scaleX(1.2700);">0,31</span>
<span class="t" style="left:233.60px;top:125.00px;font-size:14.60px;color:#f2f2f2;transform:scaleX(1.2700);">0,33</span>
<span class="t" style="left:233.60px;top:149.00px;font-size:14.60px;color:#f2f2f2;transform:scaleX(1.2700);">363,81</span>
<span class="t" style="left:233.60px;top:172.00px;font-size:14.60px;color:#f2f2f2;transform:scaleX(1.2700);">7,85</span>
<span class="t" style="left:233.60px;top:195.00px;font-size:14.60px;color:#f2f2f2;transform:scaleX(1.2700);">11,53</span>
<span class="t" style="left:304.50px;top:9.00px;font-size:13.90px;color:#f2f2f2;transform:scaleX(1.2176);">Gray 65</span>
<span class="t" style="left:304.50px;top:33.00px;font-size:14.60px;color:#f2f2f2;transform:scaleX(1.2700);">0,29</span>
<span class="t" style="left:304.50px;top:56.00px;font-size:14.60px;color:#f2f2f2;transform:scaleX(1.2700);">0,31</span>
<span class="t" style="left:304.50px;top:79.00px;font-size:14.60px;color:#f2f2f2;transform:scaleX(1.2700);">293,11</span>
<span class="t" style="left:304.50px;top:102.00px;font-size:14.60px;color:#f2f2f2;transform:scaleX(1.2700);">0,31</span>
<span class="t" style="left:304.50px;top:125.00px;font-size:14.60px;color:#f2f2f2;transform:scaleX(1.2700);">0,33</span>
<span class="t" style="left:304.50px;top:149.00px;font-size:14.60px;color:#f2f2f2;transform:scaleX(1.2700);">293,14</span>
<span class="t" style="left:304.50px;top:172.00px;font-size:14.60px;color:#f2f2f2;transform:scaleX(1.2700);">7,69</span>
<span class="t" style="left:304.50px;top:195.00px;font-size:14.60px;color:#f2f2f2;transform:scaleX(1.2700);">11,81</span>
<span class="t" style="left:375.30px;top:9.00px;font-size:13.90px;color:#f2f2f2;transform:scaleX(1.2257);">Gray 50</span>
<span class="t" style="left:375.30px;top:33.00px;font-size:14.60px;color:#f2f2f2;transform:scaleX(1.2700);">0,29</span>
<span class="t" style="left:375.30px;top:56.00px;font-size:14.60px;color:#f2f2f2;transform:scaleX(1.2700);">0,31</span>
<span class="t" style="left:375.30px;top:79.00px;font-size:14.60px;color:#f2f2f2;transform:scaleX(1.2700);">226,40</span>
<span class="t" style="left:375.30px;top:102.00px;font-size:14.60px;color:#f2f2f2;transform:scaleX(1.2700);">0,31</span>
<span class="t" style="left:375.30px;top:125.00px;font-size:14.60px;color:#f2f2f2;transform:scaleX(1.2700);">0,33</span>
<span class="t" style="left:375.30px;top:149.00px;font-size:14.60px;color:#f2f2f2;transform:scaleX(1.2700);">225,75</span>
<span class="t" style="left:375.30px;top:172.00px;font-size:14.60px;color:#f2f2f2;transform:scaleX(1.2700);">6,69</span>
<span class="t" style="left:375.30px;top:195.00px;font-size:14.60px;color:#f2f2f2;transform:scaleX(1.2700);">10,93</span>
<span class="t" style="left:446.00px;top:9.00px;font-size:13.90px;color:#f2f2f2;transform:scaleX(1.2095);">Gray 35</span>
<span class="t" style="left:446.00px;top:33.00px;font-size:14.60px;color:#f2f2f2;transform:scaleX(1.2700);">0,29</span>
<span class="t" style="left:446.00px;top:56.00px;font-size:14.60px;color:#f2f2f2;transform:scaleX(1.2700);">0,31</span>
<span class="t" style="left:446.00px;top:79.00px;font-size:14.60px;color:#f2f2f2;transform:scaleX(1.2700);">161,21</span>
<span class="t" style="left:446.00px;top:102.00px;font-size:14.60px;color:#f2f2f2;transform:scaleX(1.2700);">0,31</span>
<span class="t" style="left:446.00px;top:125.00px;font-size:14.60px;color:#f2f2f2;transform:scaleX(1.2700);">0,33</span>
<span class="t" style="left:446.00px;top:149.00px;font-size:14.60px;color:#f2f2f2;transform:scaleX(1.2700);">157,20</span>
<span class="t" style="left:446.00px;top:172.00px;font-size:14.60px;color:#f2f2f2;transform:scaleX(1.2700);">6,17</span>
<span class="t" style="left:446.00px;top:195.00px;font-size:14.60px;color:#f2f2f2;transform:scaleX(1.2700);">11,10</span>
<span class="t" style="left:519.85px;top:9.00px;font-size:13.90px;color:#f2f2f2;transform:scaleX(1.1966);">Black</span>
<span class="t" style="left:517.00px;top:33.00px;font-size:14.60px;color:#f2f2f2;transform:scaleX(1.2700);">0,27</span>
<span class="t" style="left:517.00px;top:56.00px;font-size:14.60px;color:#f2f2f2;transform:scaleX(1.2700);">0,27</span>
<span class="t" style="left:517.00px;top:79.00px;font-size:14.60px;color:#f2f2f2;transform:scaleX(1.2700);">0,28</span>
<span class="t" style="left:517.00px;top:102.00px;font-size:14.60px;color:#f2f2f2;transform:scaleX(1.2700);">0,31</span>
<span class="t" style="left:517.00px;top:125.00px;font-size:14.60px;color:#f2f2f2;transform:scaleX(1.2700);">0,33</span>
<span class="t" style="left:517.00px;top:149.00px;font-size:14.60px;color:#f2f2f2;transform:scaleX(1.2700);">0,00</span>
<span class="t" style="left:517.00px;top:172.00px;font-size:14.60px;color:#f2f2f2;transform:scaleX(1.2700);">0,60</span>
<span class="t" style="left:517.00px;top:195.00px;font-size:14.60px;color:#f2f2f2;transform:scaleX(1.2700);">68,78</span>
<span class="t" style="left:573.50px;top:9.00px;font-size:13.90px;color:#f2f2f2;transform:scaleX(1.2098);">Dark Skin</span>
<span class="t" style="left:573.50px;top:33.00px;font-size:14.60px;color:#f2f2f2;transform:scaleX(1.2700);">0,39</span>
<span class="t" style="left:573.50px;top:56.00px;font-size:14.60px;color:#f2f2f2;transform:scaleX(1.2700);">0,35</span>
<span class="t" style="left:573.50px;top:79.00px;font-size:14.60px;color:#f2f2f2;transform:scaleX(1.2700);">42,94</span>
<span class="t" style="left:573.50px;top:102.00px;font-size:14.60px;color:#f2f2f2;transform:scaleX(1.2700);">0,40</span>
<span class="t" style="left:573.50px;top:125.00px;font-size:14.60px;color:#f2f2f2;transform:scaleX(1.2700);">0,36</span>
<span class="t" style="left:573.50px;top:149.00px;font-size:14.60px;color:#f2f2f2;transform:scaleX(1.2700);">46,31</span>
<span class="t" style="left:573.50px;top:172.00px;font-size:14.60px;color:#f2f2f2;transform:scaleX(1.2700);">2,61</span>
<span class="t" style="left:573.50px;top:195.00px;font-size:14.60px;color:#f2f2f2;transform:scaleX(1.2700);">7,74</span>
<span class="t" style="left:658.00px;top:9.00px;font-size:13.90px;color:#f2f2f2;transform:scaleX(1.2187);">Light Skin</span>
<span class="t" style="left:658.00px;top:33.00px;font-size:14.60px;color:#f2f2f2;transform:scaleX(1.2700);">0,36</span>
<span class="t" style="left:658.00px;top:56.00px;font-size:14.60px;color:#f2f2f2;transform:scaleX(1.2700);">0,34</span>
<span class="t" style="left:658.00px;top:79.00px;font-size:14.60px;color:#f2f2f2;transform:scaleX(1.2700);">160,64</span>
<span class="t" style="left:658.00px;top:102.00px;font-size:14.60px;color:#f2f2f2;transform:scaleX(1.2700);">0,38</span>
<span class="t" style="left:658.00px;top:125.00px;font-size:14.60px;color:#f2f2f2;transform:scaleX(1.2700);">0,36</span>
<span class="t" style="left:658.00px;top:149.00px;font-size:14.60px;color:#f2f2f2;transform:scaleX(1.2700);">160,43</span>
<span class="t" style="left:658.00px;top:172.00px;font-size:14.60px;color:#f2f2f2;transform:scaleX(1.2700);">3,69</span>
<span class="t" style="left:658.00px;top:195.00px;font-size:14.60px;color:#f2f2f2;transform:scaleX(1.2700);">10,07</span>
<span class="t" style="left:743.40px;top:9.00px;font-size:13.90px;color:#f2f2f2;transform:scaleX(1.1960);">Blue Sky</span>
<span class="t" style="left:743.40px;top:33.00px;font-size:14.60px;color:#f2f2f2;transform:scaleX(1.2700);">0,23</span>
<span class="t" style="left:743.40px;top:56.00px;font-size:14.60px;color:#f2f2f2;transform:scaleX(1.2700);">0,24</span>
<span class="t" style="left:743.40px;top:79.00px;font-size:14.60px;color:#f2f2f2;transform:scaleX(1.2700);">85,78</span>
<span class="t" style="left:743.40px;top:102.00px;font-size:14.60px;color:#f2f2f2;transform:scaleX(1.2700);">0,25</span>
<span class="t" style="left:743.40px;top:125.00px;font-size:14.60px;color:#f2f2f2;transform:scaleX(1.2700);">0,27</span>
<span class="t" style="left:743.40px;top:149.00px;font-size:14.60px;color:#f2f2f2;transform:scaleX(1.2700);">85,97</span>
<span class="t" style="left:743.40px;top:172.00px;font-size:14.60px;color:#f2f2f2;transform:scaleX(1.2700);">3,94</span>
<span class="t" style="left:743.40px;top:195.00px;font-size:14.60px;color:#f2f2f2;transform:scaleX(1.2700);">15,50</span>
<span class="t" style="left:819.60px;top:9.00px;font-size:13.90px;color:#f2f2f2;transform:scaleX(1.2151);">Foliage</span>
<span class="t" style="left:819.60px;top:33.00px;font-size:14.60px;color:#f2f2f2;transform:scaleX(1.2700);">0,33</span>
<span class="t" style="left:819.60px;top:56.00px;font-size:14.60px;color:#f2f2f2;transform:scaleX(1.2700);">0,42</span>
<span class="t" style="left:819.60px;top:79.00px;font-size:14.60px;color:#f2f2f2;transform:scaleX(1.2700);">56,58</span>
<span class="t" style="left:819.60px;top:102.00px;font-size:14.60px;color:#f2f2f2;transform:scaleX(1.2700);">0,34</span>
<span class="t" style="left:819.60px;top:125.00px;font-size:14.60px;color:#f2f2f2;transform:scaleX(1.2700);">0,43</span>
<span class="t" style="left:819.60px;top:149.00px;font-size:14.60px;color:#f2f2f2;transform:scaleX(1.2700);">59,92</span>
<span class="t" style="left:819.60px;top:172.00px;font-size:14.60px;color:#f2f2f2;transform:scaleX(1.2700);">2,70</span>
<span class="t" style="left:819.60px;top:195.00px;font-size:14.60px;color:#f2f2f2;transform:scaleX(1.2700);">8,50</span>
<span class="t" style="left:886.50px;top:9.00px;font-size:13.90px;color:#f2f2f2;transform:scaleX(1.2604);">Blue Flower</span>
<span class="t" style="left:886.50px;top:33.00px;font-size:14.60px;color:#f2f2f2;transform:scaleX(1.2700);">0,25</span>
<span class="t" style="left:886.50px;top:56.00px;font-size:14.60px;color:#f2f2f2;transform:scaleX(1.2700);">0,24</span>
<span class="t" style="left:886.50px;top:79.00px;font-size:14.60px;color:#f2f2f2;transform:scaleX(1.2700);">108,45</span>
<span class="t" style="left:886.50px;top:102.00px;font-size:14.60px;color:#f2f2f2;transform:scaleX(1.2700);">0,27</span>
<span class="t" style="left:886.50px;top:125.00px;font-size:14.60px;color:#f2f2f2;transform:scaleX(1.2700);">0,25</span>
<span class="t" style="left:886.50px;top:149.00px;font-size:14.60px;color:#f2f2f2;transform:scaleX(1.2700);">107,21</span>
<span class="t" style="left:886.50px;top:172.00px;font-size:14.60px;color:#f2f2f2;transform:scaleX(1.2700);">5,23</span>
<span class="t" style="left:886.50px;top:195.00px;font-size:14.60px;color:#f2f2f2;transform:scaleX(1.2700);">13,93</span>
<span class="t" style="left:990.40px;top:9.00px;font-size:13.90px;color:#f2f2f2;transform:scaleX(1.2420);">Bluish Green</span>
<span class="t" style="left:990.40px;top:33.00px;font-size:14.60px;color:#f2f2f2;transform:scaleX(1.2700);">0,24</span>
<span class="t" style="left:990.40px;top:56.00px;font-size:14.60px;color:#f2f2f2;transform:scaleX(1.2700);">0,34</span>
<span class="t" style="left:990.40px;top:79.00px;font-size:14.60px;color:#f2f2f2;transform:scaleX(1.2700);">191,13</span>
<span class="t" style="left:990.40px;top:102.00px;font-size:14.60px;color:#f2f2f2;transform:scaleX(1.2700);">0,26</span>
<span class="t" style="left:990.40px;top:125.00px;font-size:14.60px;color:#f2f2f2;transform:scaleX(1.2700);">0,36</span>
<span class="t" style="left:990.40px;top:149.00px;font-size:14.60px;color:#f2f2f2;transform:scaleX(1.2700);">192,51</span>
<span class="t" style="left:990.40px;top:172.00px;font-size:14.60px;color:#f2f2f2;transform:scaleX(1.2700);">5,67</span>
<span class="t" style="left:990.40px;top:195.00px;font-size:14.60px;color:#f2f2f2;transform:scaleX(1.2700);">12,11</span>
<span class="t" style="left:1100.90px;top:9.00px;font-size:13.90px;color:#f2f2f2;transform:scaleX(1.2296);">Orange</span>
<span class="t" style="left:1100.90px;top:33.00px;font-size:14.60px;color:#f2f2f2;transform:scaleX(1.2700);">0,51</span>
<span class="t" style="left:1100.90px;top:56.00px;font-size:14.60px;color:#f2f2f2;transform:scaleX(1.2700);">0,41</span>
<span class="t" style="left:1100.90px;top:79.00px;font-size:14.60px;color:#f2f2f2;transform:scaleX(1.2700);">126,15</span>
<span class="t" style="left:1100.90px;top:102.00px;font-size:14.60px;color:#f2f2f2;transform:scaleX(1.2700);">0,51</span>
<span class="t" style="left:1100.90px;top:125.00px;font-size:14.60px;color:#f2f2f2;transform:scaleX(1.2700);">0,41</span>
<span class="t" style="left:1100.90px;top:149.00px;font-size:14.60px;color:#f2f2f2;transform:scaleX(1.2700);">130,33</span>
<span class="t" style="left:1100.90px;top:172.00px;font-size:14.60px;color:#f2f2f2;transform:scaleX(1.2700);">0,86</span>
<span class="t" style="left:1100.90px;top:195.00px;font-size:14.60px;color:#f2f2f2;transform:scaleX(1.2700);">2,69</span>
<span class="t" style="left:1168.90px;top:9.00px;font-size:13.90px;color:#f2f2f2;transform:scaleX(1.2589);">Purplish Blue</span>
<span class="t" style="left:1168.90px;top:33.00px;font-size:14.60px;color:#f2f2f2;transform:scaleX(1.2700);">0,20</span>
<span class="t" style="left:1168.90px;top:56.00px;font-size:14.60px;color:#f2f2f2;transform:scaleX(1.2700);">0,17</span>
<span class="t" style="left:1168.90px;top:79.00px;font-size:14.60px;color:#f2f2f2;transform:scaleX(1.2700);">53,77</span>
<span class="t" style="left:1168.90px;top:102.00px;font-size:14.60px;color:#f2f2f2;transform:scaleX(1.2700);">0,22</span>
<span class="t" style="left:1168.90px;top:125.00px;font-size:14.60px;color:#f2f2f2;transform:scaleX(1.2700);">0,19</span>
<span class="t" style="left:1168.90px;top:149.00px;font-size:14.60px;color:#f2f2f2;transform:scaleX(1.2700);">54,04</span>
<span class="t" style="left:1168.90px;top:172.00px;font-size:14.60px;color:#f2f2f2;transform:scaleX(1.2700);">3,94</span>
<span class="t" style="left:1168.90px;top:195.00px;font-size:14.60px;color:#f2f2f2;transform:scaleX(1.2700);">18,94</span>
<span class="t" style="left:1282.60px;top:9.00px;font-size:13.90px;color:#f2f2f2;transform:scaleX(1.3150);">Moderate Red</span>
<span class="t" style="left:1282.60px;top:33.00px;font-size:14.60px;color:#f2f2f2;transform:scaleX(1.2700);">0,45</span>
<span class="t" style="left:1282.60px;top:56.00px;font-size:14.60px;color:#f2f2f2;transform:scaleX(1.2700);">0,31</span>
<span class="t" style="left:1282.60px;top:79.00px;font-size:14.60px;color:#f2f2f2;transform:scaleX(1.2700);">82,46</span>
<span class="t" style="left:1282.60px;top:102.00px;font-size:14.60px;color:#f2f2f2;transform:scaleX(1.2700);">0,46</span>
<span class="t" style="left:1282.60px;top:125.00px;font-size:14.60px;color:#f2f2f2;transform:scaleX(1.2700);">0,31</span>
<span class="t" style="left:1282.60px;top:149.00px;font-size:14.60px;color:#f2f2f2;transform:scaleX(1.2700);">85,86</span>
<span class="t" style="left:1282.60px;top:172.00px;font-size:14.60px;color:#f2f2f2;transform:scaleX(1.2700);">2,05</span>
<span class="t" style="left:1282.60px;top:195.00px;font-size:14.60px;color:#f2f2f2;transform:scaleX(1.2700);">6,06</span>
</div>
<div style="left:1668.50px;top:660.00px;width:3.00px;height:228.00px;background:#1c1c1c"></div>
<div style="left:2.00px;top:929.00px;width:1266.00px;height:77.00px;background:#373737"></div>
<div style="left:2.5px;top:926px;width:1265.5px;height:66px;overflow:hidden">
<div style="left:-32.4px;top:3.8px;width:61.8px;height:60.5px;border-radius:5px;background:linear-gradient(#a2a2a2,#8c8c8c 12%,#636363)"></div>
<div style="left:-26.1px;top:10px;width:49.4px;height:15.2px;border-radius:4.5px;background:rgb(132,128,190);box-shadow:inset 1px 1px 1.5px rgba(0,0,0,.45)"></div>
<div style="left:32.6px;top:3.8px;width:61.8px;height:60.5px;border-radius:5px;background:linear-gradient(#a2a2a2,#8c8c8c 12%,#636363)"></div>
<div style="left:38.9px;top:10px;width:49.4px;height:15.2px;border-radius:4.5px;background:rgb(98,192,172);box-shadow:inset 1px 1px 1.5px rgba(0,0,0,.45)"></div>
<div style="left:97.6px;top:3.8px;width:61.8px;height:60.5px;border-radius:5px;background:linear-gradient(#a2a2a2,#8c8c8c 12%,#636363)"></div>
<div style="left:103.9px;top:10px;width:49.4px;height:30.2px;border-radius:4.5px;background:rgb(222,124,42);box-shadow:inset 1px 1px 1.5px rgba(0,0,0,.45)"></div>
<div style="left:162.6px;top:3.8px;width:61.8px;height:60.5px;border-radius:5px;background:linear-gradient(#a2a2a2,#8c8c8c 12%,#636363)"></div>
<div style="left:168.9px;top:10px;width:49.4px;height:15.2px;border-radius:4.5px;background:rgb(74,92,170);box-shadow:inset 1px 1px 1.5px rgba(0,0,0,.45)"></div>
<div style="left:227.6px;top:3.8px;width:61.8px;height:60.5px;border-radius:5px;background:linear-gradient(#a2a2a2,#8c8c8c 12%,#636363)"></div>
<div style="left:233.9px;top:10px;width:49.4px;height:15.2px;border-radius:4.5px;background:rgb(200,84,100);box-shadow:inset 1px 1px 1.5px rgba(0,0,0,.45)"></div>
<div style="left:292.6px;top:3.8px;width:61.8px;height:60.5px;border-radius:5px;background:linear-gradient(#a2a2a2,#8c8c8c 12%,#636363)"></div>
<div style="left:298.9px;top:10px;width:49.4px;height:30.2px;border-radius:4.5px;background:rgb(92,60,112);box-shadow:inset 1px 1px 1.5px rgba(0,0,0,.45)"></div>
<div style="left:357.6px;top:3.8px;width:61.8px;height:60.5px;border-radius:5px;background:linear-gradient(#a2a2a2,#8c8c8c 12%,#636363)"></div>
<div style="left:363.9px;top:10px;width:49.4px;height:15.2px;border-radius:4.5px;background:rgb(160,196,62);box-shadow:inset 1px 1px 1.5px rgba(0,0,0,.45)"></div>
<div style="left:422.6px;top:3.8px;width:61.8px;height:60.5px;border-radius:5px;background:linear-gradient(#a2a2a2,#8c8c8c 12%,#636363)"></div>
<div style="left:428.9px;top:10px;width:49.4px;height:15.2px;border-radius:4.5px;background:rgb(232,166,46);box-shadow:inset 1px 1px 1.5px rgba(0,0,0,.45)"></div>
<div style="left:487.6px;top:3.8px;width:61.8px;height:60.5px;border-radius:5px;background:linear-gradient(#a2a2a2,#8c8c8c 12%,#636363)"></div>
<div style="left:493.9px;top:10px;width:49.4px;height:30.2px;border-radius:4.5px;background:rgb(48,60,160);box-shadow:inset 1px 1px 1.5px rgba(0,0,0,.45)"></div>
<div style="left:552.6px;top:3.8px;width:61.8px;height:60.5px;border-radius:5px;background:linear-gradient(#a2a2a2,#8c8c8c 12%,#636363)"></div>
<div style="left:558.9px;top:10px;width:49.4px;height:30.2px;border-radius:4.5px;background:rgb(70,152,74);box-shadow:inset 1px 1px 1.5px rgba(0,0,0,.45)"></div>
<div style="left:617.6px;top:3.8px;width:61.8px;height:60.5px;border-radius:5px;background:linear-gradient(#a2a2a2,#8c8c8c 12%,#636363)"></div>
<div style="left:623.9px;top:10px;width:49.4px;height:30.2px;border-radius:4.5px;background:rgb(178,48,58);box-shadow:inset 1px 1px 1.5px rgba(0,0,0,.45)"></div>
<div style="left:682.6px;top:3.8px;width:61.8px;height:60.5px;border-radius:5px;background:linear-gradient(#a2a2a2,#8c8c8c 12%,#636363)"></div>
<div style="left:688.9px;top:10px;width:49.4px;height:30.2px;border-radius:4.5px;background:rgb(240,202,32);box-shadow:inset 1px 1px 1.5px rgba(0,0,0,.45)"></div>
<div style="left:747.6px;top:3.8px;width:61.8px;height:60.5px;border-radius:5px;background:linear-gradient(#a2a2a2,#8c8c8c 12%,#636363)"></div>
<div style="left:753.9px;top:10px;width:49.4px;height:30.2px;border-radius:4.5px;background:rgb(190,86,150);box-shadow:inset 1px 1px 1.5px rgba(0,0,0,.45)"></div>
<div style="left:812.6px;top:3.8px;width:61.8px;height:60.5px;border-radius:5px;background:linear-gradient(#a2a2a2,#8c8c8c 12%,#636363)"></div>
<div style="left:818.9px;top:10px;width:49.4px;height:30.2px;border-radius:4.5px;background:rgb(0,136,170);box-shadow:inset 1px 1px 1.5px rgba(0,0,0,.45)"></div>
<div style="left:877.6px;top:3.8px;width:61.8px;height:60.5px;border-radius:5px;background:linear-gradient(#a2a2a2,#8c8c8c 12%,#636363)"></div>
<div style="left:883.9px;top:10px;width:49.4px;height:30.2px;border-radius:4.5px;background:rgb(255,0,0);box-shadow:inset 1px 1px 1.5px rgba(0,0,0,.45)"></div>
<div style="left:942.6px;top:3.8px;width:61.8px;height:60.5px;border-radius:5px;background:linear-gradient(#a2a2a2,#8c8c8c 12%,#636363)"></div>
<div style="left:948.9px;top:10px;width:49.4px;height:15.2px;border-radius:4.5px;background:rgb(0,255,0);box-shadow:inset 1px 1px 1.5px rgba(0,0,0,.45)"></div>
<div style="left:1007.6px;top:3.8px;width:61.8px;height:60.5px;border-radius:5px;background:linear-gradient(#a2a2a2,#8c8c8c 12%,#636363)"></div>
<div style="left:1013.9px;top:10px;width:49.4px;height:15.2px;border-radius:4.5px;background:rgb(0,0,255);box-shadow:inset 1px 1px 1.5px rgba(0,0,0,.45)"></div>
<div style="left:1072.6px;top:3.8px;width:61.8px;height:60.5px;border-radius:5px;background:linear-gradient(#a2a2a2,#8c8c8c 12%,#636363)"></div>
<div style="left:1078.9px;top:10px;width:49.4px;height:15.2px;border-radius:4.5px;background:rgb(0,255,255);box-shadow:inset 1px 1px 1.5px rgba(0,0,0,.45)"></div>
<div style="left:1137.6px;top:3.8px;width:61.8px;height:60.5px;border-radius:5px;background:linear-gradient(#a2a2a2,#8c8c8c 12%,#636363)"></div>
<div style="left:1143.9px;top:10px;width:49.4px;height:15.2px;border-radius:4.5px;background:rgb(255,0,255);box-shadow:inset 1px 1px 1.5px rgba(0,0,0,.45)"></div>
<div style="left:1202.6px;top:3.8px;width:61.8px;height:60.5px;border-radius:5px;background:linear-gradient(#222,#2e2e2e)"></div>
<div style="left:1208.9px;top:10px;width:49.4px;height:15.2px;border-radius:4.5px;background:rgb(255,255,0);box-shadow:inset 1px 1px 1.5px rgba(0,0,0,.45)"></div>
</div>
<div style="left:2px;top:950px;width:40px;height:40px;overflow:hidden">
<span class="t" style="left:-21.00px;top:10.00px;font-size:12.00px;color:#242424;font-weight:700;transform:scaleX(1.0114);">Blue</span>
<span class="t" style="left:-21.00px;top:25.00px;font-size:12.00px;color:#242424;font-weight:700;transform:scaleX(1.0342);">Flower</span>
</div>
<span class="t" style="left:47.40px;top:960.00px;font-size:12.00px;color:#242424;font-weight:700;transform:scaleX(1.0144);">Bluish</span>
<span class="t" style="left:47.40px;top:975.00px;font-size:12.00px;color:#242424;font-weight:700;transform:scaleX(1.0669);">Green</span>
<span class="t" style="left:108.90px;top:975.00px;font-size:12.00px;color:#242424;font-weight:700;transform:scaleX(1.0521);">Orange</span>
<span class="t" style="left:171.10px;top:960.00px;font-size:12.00px;color:#242424;font-weight:700;transform:scaleX(1.0372);">Purplish</span>
<span class="t" style="left:171.10px;top:975.00px;font-size:12.00px;color:#242424;font-weight:700;transform:scaleX(1.0114);">Blue</span>
<span class="t" style="left:230.95px;top:960.00px;font-size:12.00px;color:#242424;font-weight:700;transform:scaleX(1.1267);">Moderate</span>
<span class="t" style="left:230.95px;top:975.00px;font-size:12.00px;color:#242424;font-weight:700;transform:scaleX(0.9838);">Red</span>
<span class="t" style="left:306.10px;top:975.00px;font-size:12.00px;color:#242424;font-weight:700;transform:scaleX(1.0658);">Purple</span>
<span class="t" style="left:371.10px;top:960.00px;font-size:12.00px;color:#242424;font-weight:700;transform:scaleX(1.0651);">Yellow</span>
<span class="t" style="left:371.10px;top:975.00px;font-size:12.00px;color:#242424;font-weight:700;transform:scaleX(1.0669);">Green</span>
<span class="t" style="left:433.90px;top:960.00px;font-size:12.00px;color:#242424;font-weight:700;transform:scaleX(1.0521);">Orange</span>
<span class="t" style="left:433.90px;top:975.00px;font-size:12.00px;color:#242424;font-weight:700;transform:scaleX(1.0651);">Yellow</span>
<span class="t" style="left:507.85px;top:975.00px;font-size:12.00px;color:#242424;font-weight:700;transform:scaleX(1.0114);">Blue</span>
<span class="t" style="left:567.50px;top:975.00px;font-size:12.00px;color:#242424;font-weight:700;transform:scaleX(1.0669);">Green</span>
<span class="t" style="left:639.85px;top:975.00px;font-size:12.00px;color:#242424;font-weight:700;transform:scaleX(0.9838);">Red</span>
<span class="t" style="left:696.10px;top:975.00px;font-size:12.00px;color:#242424;font-weight:700;transform:scaleX(1.0651);">Yellow</span>
<span class="t" style="left:754.05px;top:975.00px;font-size:12.00px;color:#242424;font-weight:700;transform:scaleX(1.1055);">Magenta</span>
<span class="t" style="left:832.20px;top:975.00px;font-size:12.00px;color:#242424;font-weight:700;transform:scaleX(0.9407);">Cyan</span>
<span class="t" style="left:881.75px;top:975.00px;font-size:12.00px;color:#242424;font-weight:700;transform:scaleX(1.0317);">100% Red</span>
<span class="t" style="left:957.50px;top:960.00px;font-size:12.00px;color:#242424;font-weight:700;transform:scaleX(1.0751);">100%</span>
<span class="t" style="left:957.50px;top:975.00px;font-size:12.00px;color:#242424;font-weight:700;transform:scaleX(1.0669);">Green</span>
<span class="t" style="left:1024.50px;top:960.00px;font-size:12.00px;color:#242424;font-weight:700;transform:scaleX(1.0751);">100%</span>
<span class="t" style="left:1024.50px;top:975.00px;font-size:12.00px;color:#242424;font-weight:700;transform:scaleX(1.0114);">Blue</span>
<span class="t" style="left:1089.50px;top:960.00px;font-size:12.00px;color:#242424;font-weight:700;transform:scaleX(1.0751);">100%</span>
<span class="t" style="left:1089.50px;top:975.00px;font-size:12.00px;color:#242424;font-weight:700;transform:scaleX(0.9407);">Cyan</span>
<span class="t" style="left:1144.05px;top:960.00px;font-size:12.00px;color:#242424;font-weight:700;transform:scaleX(1.0751);">100%</span>
<span class="t" style="left:1144.05px;top:975.00px;font-size:12.00px;color:#242424;font-weight:700;transform:scaleX(1.1055);">Magenta</span>
<span class="t" style="left:1216.10px;top:960.00px;font-size:12.00px;color:#fff;font-weight:700;transform:scaleX(1.0751);">100%</span>
<span class="t" style="left:1216.10px;top:975.00px;font-size:12.00px;color:#fff;font-weight:700;transform:scaleX(1.0651);">Yellow</span>
<div style="left:2.00px;top:990.60px;width:1265.50px;height:15.50px;background:#606060"></div>
<div style="left:5.00px;top:992.00px;width:12.00px;height:13.00px;background:#8a8a8a;border-radius:2px"></div>
<svg style="left:7px;top:994px" width="8" height="9"><path d="M7 0v9l-6.5-4.5z" fill="#333"/></svg>
<div style="left:452.00px;top:992.20px;width:796.00px;height:12.60px;background:#454545;border-radius:6px"></div>
<div style="left:1253.50px;top:992.00px;width:12.00px;height:13.00px;background:#8a8a8a;border-radius:2px"></div>
<svg style="left:1256px;top:994px" width="8" height="9"><path d="M1 0v9l6.5-4.5z" fill="#333"/></svg>
<div style="left:1268.00px;top:928.50px;width:403.00px;height:78.00px;background:#2c2c2c"></div>
<div style="left:1268.20px;top:929.50px;width:59.80px;height:22.30px;background:linear-gradient(#a0a0a0,#858585);border-radius:5px 5px 0 0"></div>
<div style="left:1289.10px;top:931.80px;width:19.00px;height:19.00px;border-radius:50%;background:linear-gradient(#787878,#9c9c9c)"></div>
<svg style="left:1293px;top:936.5px" width="11" height="7"><path d="M0.3 6.5h10.4l-5.2-6z" fill="#333"/></svg>
<div style="left:1268.20px;top:952.80px;width:59.80px;height:54.00px;background:linear-gradient(#8a8a8a,#686868)"></div>
<div style="left:1278.70px;top:960.00px;width:39.20px;height:38.40px;background:linear-gradient(#b0b0b0,#a0a0a0 50%,#848484 51%,#8c8c8c);border:3px solid #202020;border-radius:6.5px;box-sizing:border-box"></div>
<div style="left:1290.20px;top:971.00px;width:17.00px;height:16.80px;background:linear-gradient(#1c1c1c 50%,#000 51%)"></div>
<div style="left:1329.10px;top:928.80px;width:56.80px;height:37.70px;background:linear-gradient(90deg,#b4b4b4,rgba(180,180,180,0) 2px),linear-gradient(#a4a4a4,#727272)"></div>
<div style="left:1345.30px;top:936.00px;width:24.40px;height:24.40px;border-radius:50%;background:linear-gradient(#7a7a7a,#a6a6a6)"></div>
<div style="left:1387.10px;top:928.80px;width:55.10px;height:37.70px;background:linear-gradient(90deg,#b4b4b4,rgba(180,180,180,0) 2px),linear-gradient(#a4a4a4,#727272)"></div>
<div style="left:1402.45px;top:936.00px;width:24.40px;height:24.40px;border-radius:50%;background:linear-gradient(#7a7a7a,#a6a6a6)"></div>
<div style="left:1443.40px;top:928.80px;width:55.40px;height:37.70px;background:linear-gradient(#707070,#565656)"></div>
<div style="left:1458.90px;top:936.00px;width:24.40px;height:24.40px;border-radius:50%;background:linear-gradient(#525252,#707070)"></div>
<div style="left:1500.00px;top:928.80px;width:55.30px;height:37.70px;background:linear-gradient(90deg,#b4b4b4,rgba(180,180,180,0) 2px),linear-gradient(#a4a4a4,#727272)"></div>
<div style="left:1515.45px;top:936.00px;width:24.40px;height:24.40px;border-radius:50%;background:linear-gradient(#7a7a7a,#a6a6a6)"></div>
<div style="left:1556.50px;top:928.80px;width:55.10px;height:37.70px;background:linear-gradient(#3a3a3a,#2c2c2c)"></div>
<div style="left:1571.85px;top:936.00px;width:24.40px;height:24.40px;border-radius:50%;background:linear-gradient(#262626,#3c3c3c)"></div>
<div style="left:1612.80px;top:928.80px;width:58.00px;height:37.70px;background:linear-gradient(90deg,#b4b4b4,rgba(180,180,180,0) 2px),linear-gradient(#a4a4a4,#727272)"></div>
<div style="left:1629.60px;top:936.00px;width:24.40px;height:24.40px;border-radius:50%;background:linear-gradient(#808080,#aaa)"></div>
<svg style="left:1347.5px;top:938.2px" width="20" height="20" viewBox="-10.0 -10.0 20 20"><rect x="-4.9" y="-4.9" width="9.8" height="9.8" fill="#2e2e2e"/></svg>
<svg style="left:1404.7px;top:938.2px" width="20" height="20" viewBox="-10.0 -10.0 20 20"><path d="M-4 -6.2L6 0L-4 6.2z" fill="#2e2e2e"/></svg>
<svg style="left:1460.1px;top:938.2px" width="22" height="20" viewBox="-11.0 -10.0 22 20"><path d="M-4 -5.5h-3v11h3M4 -5.5h3v11h-3" fill="none" stroke="#2e2e2e" stroke-width="2.3"/><path d="M-3.2 0h6.4M-1.4 -2l-2 2l2 2M1.4 -2l2 2l-2 2" fill="none" stroke="#2e2e2e" stroke-width="1.5"/></svg>
<svg style="left:1516.7px;top:938.2px" width="22" height="20" viewBox="-11.0 -10.0 22 20"><path d="M0 0c-2 -3.4 -7.4 -3.4 -7.4 0s5.4 3.4 7.4 0c2 -3.4 7.4 -3.4 7.4 0s-5.4 3.4 -7.4 0z" fill="none" stroke="#2e2e2e" stroke-width="2"/></svg>
<svg style="left:1573.1px;top:937.2px" width="22" height="22" viewBox="-11.0 -11.0 22 22"><path d="M-6 -1.2a6.2 6.2 0 0 1 10.6 -3.2M6 1.2a6.2 6.2 0 0 1 -10.6 3.2" fill="none" stroke="#1a1a1a" stroke-width="3"/><path d="M7.2 -7.8v5.6h-5.6zM-7.2 7.8v-5.6h5.6z" fill="#1a1a1a"/></svg>
<div style="left:1329.10px;top:968.30px;width:170.00px;height:38.00px;background:linear-gradient(90deg,#b8b8b8,rgba(184,184,184,0) 2px),linear-gradient(#aaa,#767676)"></div>
<div style="left:1500.30px;top:968.30px;width:171.00px;height:38.00px;background:linear-gradient(90deg,#b8b8b8,rgba(184,184,184,0) 2px),linear-gradient(#aaa,#767676)"></div>
<div style="left:1355.70px;top:975.70px;width:24.00px;height:24.00px;border-radius:50%;background:linear-gradient(#808080,#a4a4a4)"></div>
<div style="left:1622.60px;top:975.70px;width:24.00px;height:24.00px;border-radius:50%;background:linear-gradient(#808080,#a4a4a4)"></div>
<svg style="left:1359.7px;top:980.7px" width="16" height="14" viewBox="-8.0 -7.0 16 14"><path d="M-0.5 -4.5l-4.5 4.5l4.5 4.5M5 -4.5l-4.5 4.5l4.5 4.5" fill="none" stroke="#333" stroke-width="2.1"/></svg>
<svg style="left:1626.6px;top:980.7px" width="16" height="14" viewBox="-8.0 -7.0 16 14"><path d="M0.5 -4.5l4.5 4.5l-4.5 4.5M-5 -4.5l4.5 4.5l-4.5 4.5" fill="none" stroke="#333" stroke-width="2.1"/></svg>
<span class="t" style="left:1401.50px;top:974.00px;font-size:27.20px;color:#343434;transform:scaleX(1.0393);-webkit-text-stroke:.55px #343434;">Back</span>
<span class="t" style="left:1535.40px;top:974.00px;font-size:27.20px;color:#343434;transform:scaleX(1.1337);-webkit-text-stroke:.55px #343434;">Next</span>
</div></body></html>
